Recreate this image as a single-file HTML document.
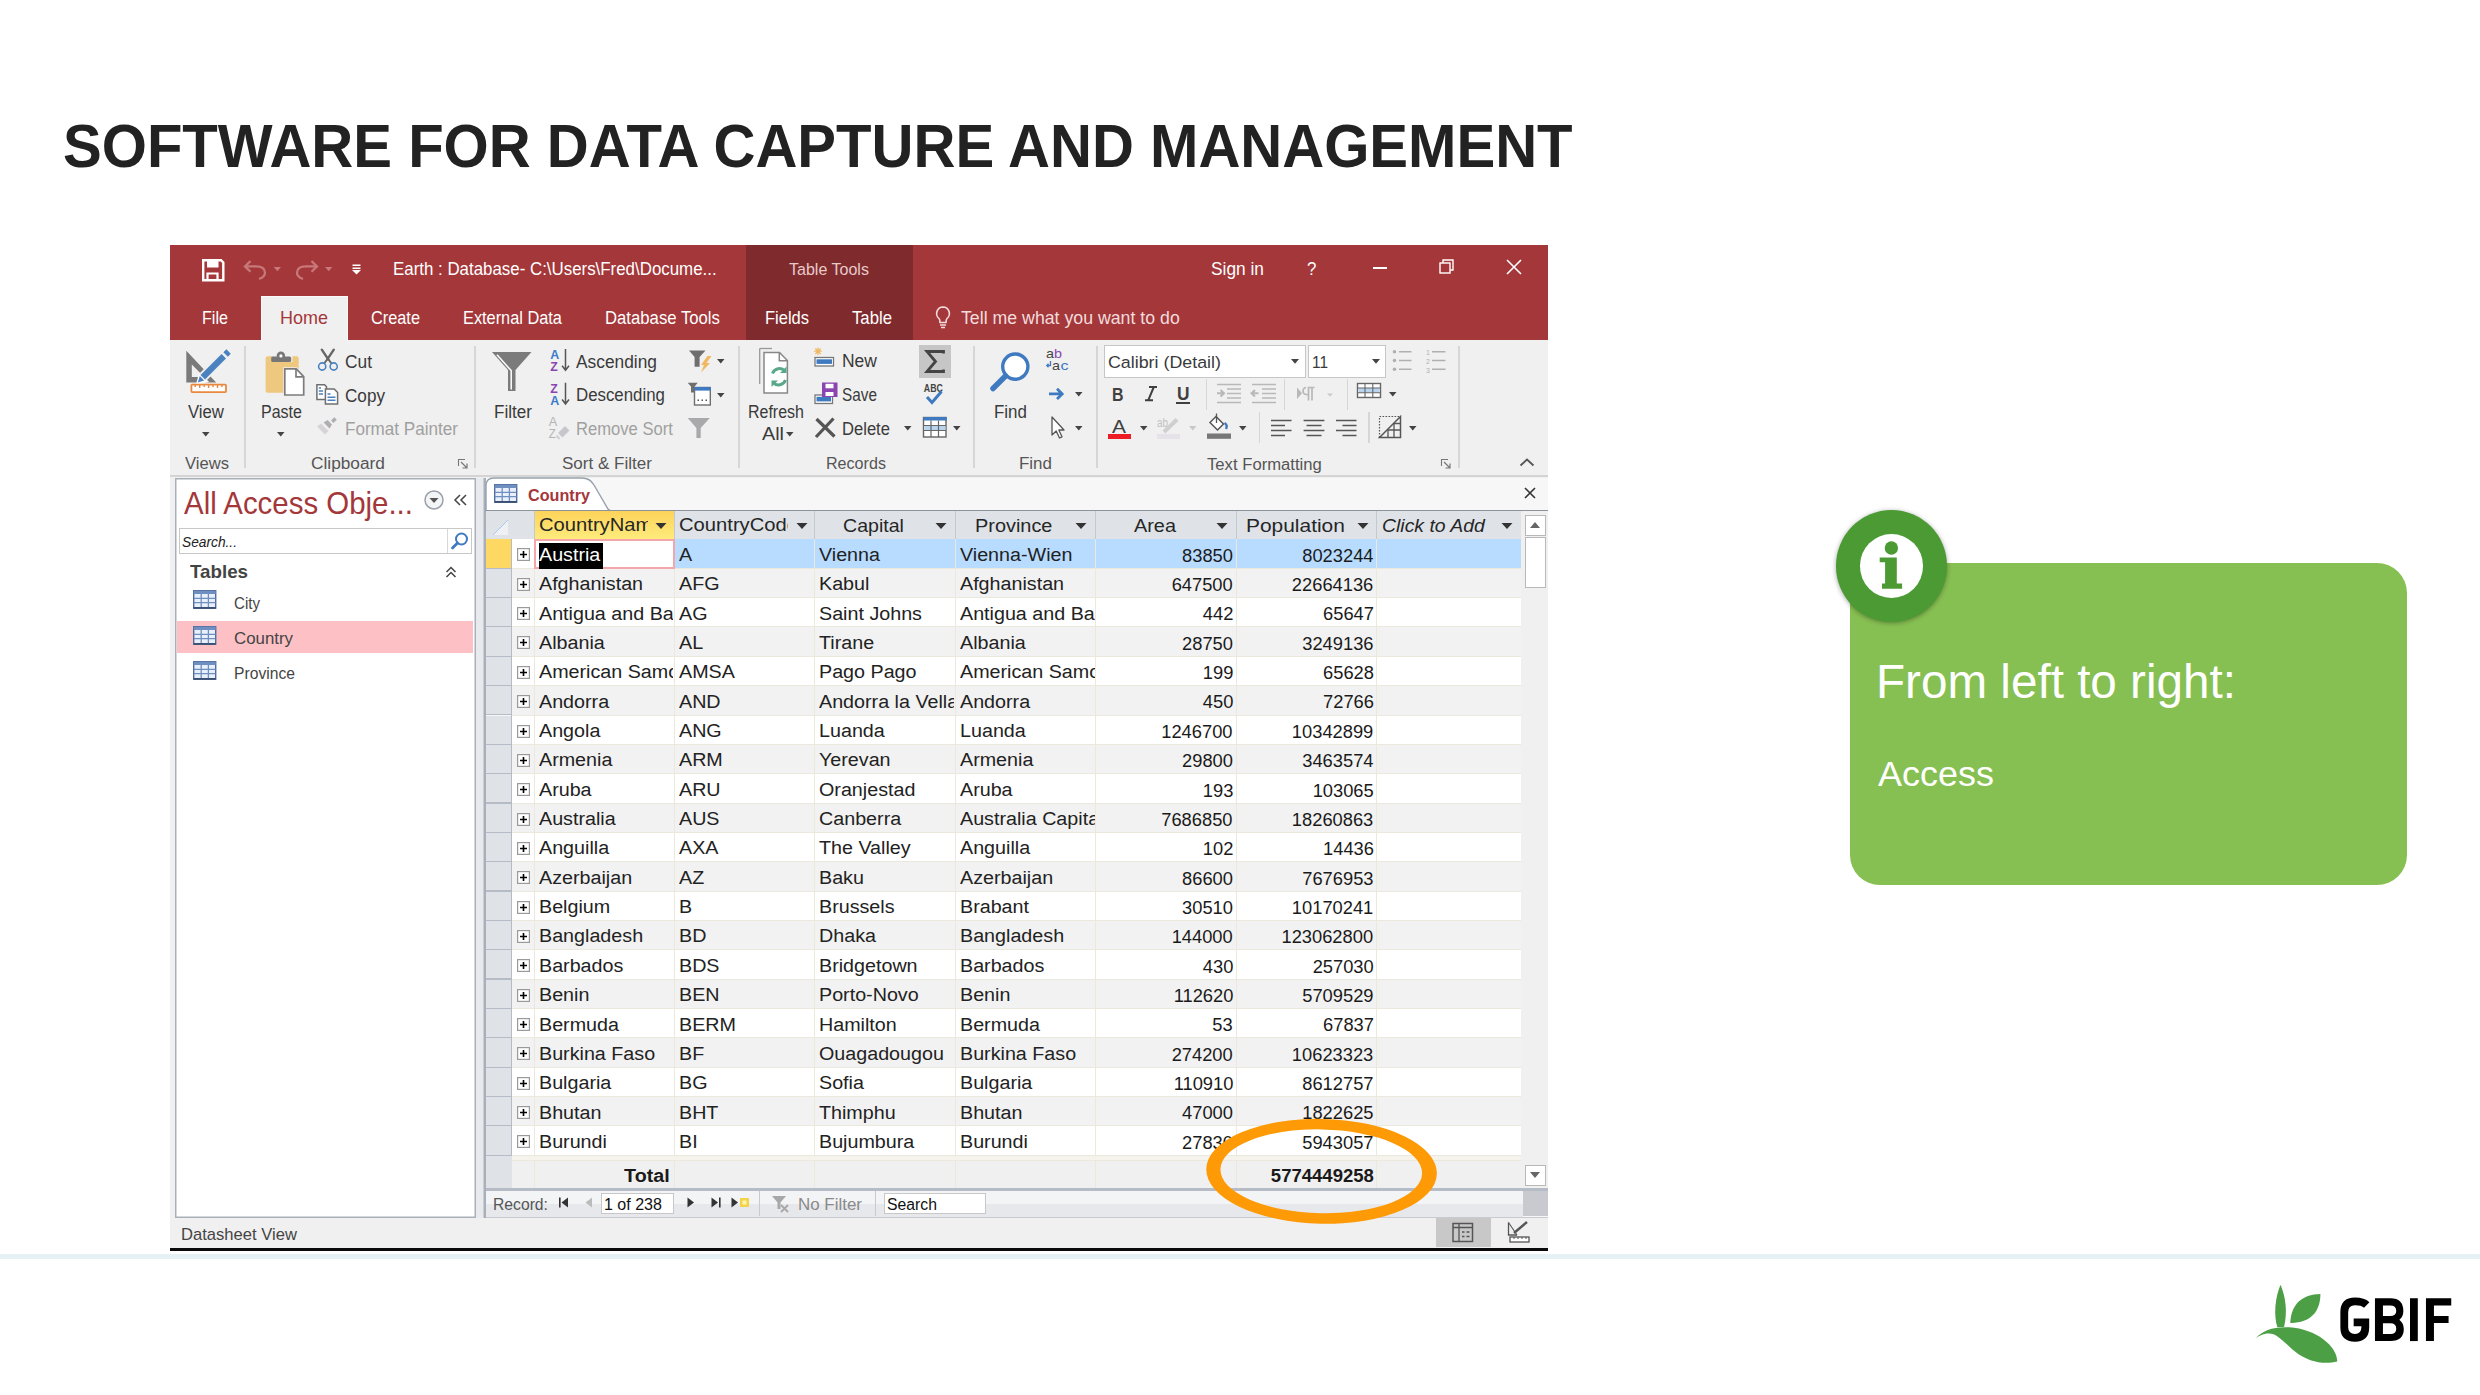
<!DOCTYPE html><html><head><meta charset="utf-8"><title>slide</title><style>
html,body{margin:0;padding:0;}
body{width:2480px;height:1395px;position:relative;overflow:hidden;background:#fff;font-family:"Liberation Sans",sans-serif;}
body>div,body>svg{position:absolute;}
.t{white-space:nowrap;}
</style></head><body>
<div class="t" style="left:63.00px;top:115.28px;font-size:61.45px;line-height:61.45px;color:#222222;transform:scaleX(0.9451);transform-origin:0 0;font-weight:bold;">SOFTWARE FOR DATA CAPTURE AND MANAGEMENT</div>
<div style="left:0.00px;top:1254.00px;width:2480.00px;height:5.00px;background:#e6f1f5;"></div>
<div style="left:170.00px;top:245.00px;width:1378.00px;height:95.00px;background:#a4373a;"></div>
<div style="left:746.00px;top:245.00px;width:167.00px;height:95.00px;background:#7f2b2e;"></div>
<div style="left:170.00px;top:340.00px;width:1378.00px;height:136.00px;background:#f0f0f0;"></div>
<div style="left:170.00px;top:475.00px;width:1378.00px;height:1.50px;background:#d4d4d4;"></div>
<div style="left:261.00px;top:296.00px;width:87.00px;height:45.00px;background:#f0f0f0;box-shadow:inset 1px 1px 0 #fafafa,inset -1px 0 0 #fafafa;"></div>
<div style="left:170.00px;top:476.50px;width:1378.00px;height:772.00px;background:#f0f0f0;"></div>
<div class="t" style="left:393.00px;top:260.52px;font-size:17.46px;line-height:17.46px;color:#ffffff;transform:scaleX(0.9679);transform-origin:0 0;">Earth : Database- C:\Users\Fred\Docume...</div>
<div class="t" style="left:789.00px;top:261.61px;font-size:16.76px;line-height:16.76px;color:#e8c9ca;transform:scaleX(0.9575);transform-origin:0 0;">Table Tools</div>
<div class="t" style="left:1211.00px;top:260.52px;font-size:17.46px;line-height:17.46px;color:#ffffff;transform:scaleX(0.9928);transform-origin:0 0;">Sign in</div>
<div class="t" style="left:1306.50px;top:260.52px;font-size:17.46px;line-height:17.46px;color:#ffffff;transform:scaleX(0.9660);transform-origin:0 0;">?</div>
<div class="t" style="left:201.70px;top:309.67px;font-size:17.88px;line-height:17.88px;color:#ffffff;transform:scaleX(0.9026);transform-origin:0 0;">File</div>
<div class="t" style="left:280.00px;top:309.67px;font-size:17.88px;line-height:17.88px;color:#a4373a;transform:scaleX(1.0065);transform-origin:0 0;">Home</div>
<div class="t" style="left:371.00px;top:309.67px;font-size:17.88px;line-height:17.88px;color:#ffffff;transform:scaleX(0.9132);transform-origin:0 0;">Create</div>
<div class="t" style="left:463.00px;top:309.67px;font-size:17.88px;line-height:17.88px;color:#ffffff;transform:scaleX(0.9140);transform-origin:0 0;">External Data</div>
<div class="t" style="left:605.00px;top:309.67px;font-size:17.88px;line-height:17.88px;color:#ffffff;transform:scaleX(0.9357);transform-origin:0 0;">Database Tools</div>
<div class="t" style="left:765.40px;top:309.67px;font-size:17.88px;line-height:17.88px;color:#ffffff;transform:scaleX(0.9227);transform-origin:0 0;">Fields</div>
<div class="t" style="left:852.00px;top:309.67px;font-size:17.88px;line-height:17.88px;color:#ffffff;transform:scaleX(0.9359);transform-origin:0 0;">Table</div>
<div class="t" style="left:961.00px;top:309.52px;font-size:17.46px;line-height:17.46px;color:#f2dcdd;transform:scaleX(1.0166);transform-origin:0 0;">Tell me what you want to do</div>
<div style="left:1372.50px;top:267.00px;width:14.50px;height:1.50px;background:#ffffff;"></div>
<svg style="left:1439.00px;top:259.00px;" width="16" height="16" viewBox="0 0 16 16"><rect x="1" y="4" width="10" height="10" fill="none" stroke="#fff" stroke-width="1.4"/><path d="M4 4V1h10v10h-3" fill="none" stroke="#fff" stroke-width="1.4"/></svg>
<svg style="left:1506.00px;top:259.00px;" width="16" height="16" viewBox="0 0 16 16"><path d="M1 1L15 15M15 1L1 15" stroke="#fff" stroke-width="1.6"/></svg>
<svg style="left:200.00px;top:257.00px;" width="26" height="26" viewBox="0 0 26 26"><path d="M3.2 3.2H21L23.3 5.5V23.3H3.2z" fill="none" stroke="#fff" stroke-width="2.4"/><rect x="7" y="3.5" width="11.5" height="7" fill="#fff"/><path d="M7.5 23V16.5H17.5V23" fill="none" stroke="#fff" stroke-width="2.2"/></svg>
<svg style="left:240.00px;top:255.00px;" width="125" height="28" viewBox="0 0 125 28"><path d="M5.5 11.4H16Q25 11.4 25 17.8Q25 22 19 24" fill="none" stroke="#c7787a" stroke-width="2.3"/><path d="M10.5 6L5 11.4L10.5 16.8" fill="none" stroke="#c7787a" stroke-width="2.3"/><path d="M33.7 12H41L37.35 16.3z" fill="#c7787a"/><path d="M76.5 11.4H66Q57 11.4 57 17.8Q57 22 63 24" fill="none" stroke="#c7787a" stroke-width="2.3"/><path d="M71.5 6L77 11.4L71.5 16.8" fill="none" stroke="#c7787a" stroke-width="2.3"/><path d="M85 12H92.4L88.7 16.3z" fill="#c7787a"/><path d="M112.5 10.2H120.5M112.5 13.3H120.5" stroke="#fff" stroke-width="1.5"/><path d="M112 15H121L116.5 19.5z" fill="#fff"/></svg>
<svg style="left:934.00px;top:305.00px;" width="18" height="24" viewBox="0 0 18 24"><path d="M9 2a6.5 6.5 0 0 0-4 11.5c1 1 1 2.5 1 4h6c0-1.5 0-3 1-4A6.5 6.5 0 0 0 9 2z" fill="none" stroke="#f2dcdd" stroke-width="1.6"/><path d="M6 20h6M7 22.5h4" stroke="#f2dcdd" stroke-width="1.6"/></svg>
<div class="t" style="left:181.00px;top:1225.67px;font-size:16.34px;line-height:16.34px;color:#444444;transform:scaleX(1.0161);transform-origin:0 0;">Datasheet View</div>
<div style="left:1435.50px;top:1218.40px;width:55.00px;height:29.00px;background:#c8c8c8;"></div>
<div style="left:170.00px;top:1247.50px;width:1378.00px;height:3.00px;background:#0a0a0a;"></div>
<div style="left:244.00px;top:346.00px;width:1.50px;height:122.00px;background:#d6d6d6;"></div>
<div style="left:474.00px;top:346.00px;width:1.50px;height:122.00px;background:#d6d6d6;"></div>
<div style="left:738.00px;top:346.00px;width:1.50px;height:122.00px;background:#d6d6d6;"></div>
<div style="left:973.00px;top:346.00px;width:1.50px;height:122.00px;background:#d6d6d6;"></div>
<div style="left:1096.00px;top:346.00px;width:1.50px;height:122.00px;background:#d6d6d6;"></div>
<div style="left:1458.00px;top:346.00px;width:1.50px;height:122.00px;background:#d6d6d6;"></div>
<div class="t" style="left:184.50px;top:456.06px;font-size:15.64px;line-height:15.64px;color:#555555;transform:scaleX(1.0616);transform-origin:0 0;">Views</div>
<div class="t" style="left:311.00px;top:456.06px;font-size:15.64px;line-height:15.64px;color:#555555;transform:scaleX(1.1052);transform-origin:0 0;">Clipboard</div>
<div class="t" style="left:561.50px;top:456.06px;font-size:15.64px;line-height:15.64px;color:#555555;transform:scaleX(1.0899);transform-origin:0 0;">Sort &amp; Filter</div>
<div class="t" style="left:826.00px;top:456.06px;font-size:15.64px;line-height:15.64px;color:#555555;transform:scaleX(1.0301);transform-origin:0 0;">Records</div>
<div class="t" style="left:1019.00px;top:456.06px;font-size:15.64px;line-height:15.64px;color:#555555;transform:scaleX(1.0844);transform-origin:0 0;">Find</div>
<div class="t" style="left:1207.00px;top:456.56px;font-size:15.64px;line-height:15.64px;color:#555555;transform:scaleX(1.0668);transform-origin:0 0;">Text Formatting</div>
<div class="t" style="left:188.00px;top:403.52px;font-size:17.46px;line-height:17.46px;color:#3a3a3a;transform:scaleX(0.9593);transform-origin:0 0;">View</div>
<div class="t" style="left:261.00px;top:403.52px;font-size:17.46px;line-height:17.46px;color:#3a3a3a;transform:scaleX(0.9184);transform-origin:0 0;">Paste</div>
<div class="t" style="left:494.00px;top:403.52px;font-size:17.46px;line-height:17.46px;color:#3a3a3a;transform:scaleX(0.9795);transform-origin:0 0;">Filter</div>
<div class="t" style="left:748.00px;top:403.52px;font-size:17.46px;line-height:17.46px;color:#3a3a3a;transform:scaleX(0.9161);transform-origin:0 0;">Refresh</div>
<div class="t" style="left:761.50px;top:426.02px;font-size:17.46px;line-height:17.46px;color:#3a3a3a;transform:scaleX(1.1338);transform-origin:0 0;">All</div>
<div class="t" style="left:994.00px;top:403.52px;font-size:17.46px;line-height:17.46px;color:#3a3a3a;transform:scaleX(0.9717);transform-origin:0 0;">Find</div>
<div class="t" style="left:345.00px;top:354.02px;font-size:17.46px;line-height:17.46px;color:#3a3a3a;transform:scaleX(0.9938);transform-origin:0 0;">Cut</div>
<div class="t" style="left:345.00px;top:388.02px;font-size:17.46px;line-height:17.46px;color:#3a3a3a;transform:scaleX(0.9814);transform-origin:0 0;">Copy</div>
<div class="t" style="left:345.00px;top:421.02px;font-size:17.46px;line-height:17.46px;color:#a0a0a0;transform:scaleX(0.9787);transform-origin:0 0;">Format Painter</div>
<div class="t" style="left:575.60px;top:353.72px;font-size:17.46px;line-height:17.46px;color:#3a3a3a;transform:scaleX(0.9935);transform-origin:0 0;">Ascending</div>
<div class="t" style="left:576.00px;top:387.02px;font-size:17.46px;line-height:17.46px;color:#3a3a3a;transform:scaleX(0.9653);transform-origin:0 0;">Descending</div>
<div class="t" style="left:576.00px;top:421.02px;font-size:17.46px;line-height:17.46px;color:#a0a0a0;transform:scaleX(0.9521);transform-origin:0 0;">Remove Sort</div>
<div class="t" style="left:842.00px;top:353.42px;font-size:17.46px;line-height:17.46px;color:#3a3a3a;transform:scaleX(1.0021);transform-origin:0 0;">New</div>
<div class="t" style="left:842.00px;top:387.02px;font-size:17.46px;line-height:17.46px;color:#3a3a3a;transform:scaleX(0.8795);transform-origin:0 0;">Save</div>
<div class="t" style="left:842.00px;top:421.02px;font-size:17.46px;line-height:17.46px;color:#3a3a3a;transform:scaleX(0.9511);transform-origin:0 0;">Delete</div>
<div style="left:1104.00px;top:345.00px;width:201.60px;height:32.60px;background:#ffffff;box-shadow:inset 0 0 0 1px #c6c6c6;"></div>
<div style="left:1307.50px;top:345.00px;width:78.50px;height:32.60px;background:#ffffff;box-shadow:inset 0 0 0 1px #c6c6c6;"></div>
<div class="t" style="left:1108.00px;top:354.61px;font-size:16.76px;line-height:16.76px;color:#3a3a3a;transform:scaleX(1.0643);transform-origin:0 0;">Calibri (Detail)</div>
<div class="t" style="left:1311.50px;top:354.61px;font-size:16.76px;line-height:16.76px;color:#3a3a3a;transform:scaleX(0.9196);transform-origin:0 0;">11</div>
<svg style="left:180.00px;top:345.00px;" width="52" height="52" viewBox="0 0 52 52">
<path d="M6.3 5.8V37.5H36.2z M11.8 19.6V31.9H24.2z" fill="#7a7a7a" fill-rule="evenodd"/>
<path d="M18 37.6L20 30.5L26 36z" fill="#fff" stroke="#fff" stroke-width="3"/>
<line x1="22.5" y1="32.5" x2="44" y2="11" stroke="#f0f0f0" stroke-width="10"/>
<line x1="22.8" y1="32.2" x2="43.8" y2="11.2" stroke="#4a82c0" stroke-width="6.3"/>
<line x1="45.6" y1="9.4" x2="48.6" y2="6.4" stroke="#4a82c0" stroke-width="6.3"/>
<path d="M17.8 37.4L19.8 31L24.2 35.4z" fill="#4a82c0"/>
<rect x="11.4" y="39.6" width="34.6" height="7.5" rx="0.8" fill="#fff" stroke="#e8893f" stroke-width="1.8"/>
<path d="M15.2 40v2M19.7 40v3M24.2 40v2M28.6 40v3M33 40v2M37.5 40v3M41.9 40v2" stroke="#e8893f" stroke-width="1.4"/>
</svg>
<svg style="left:201.25px;top:431.35px" width="9.5" height="6.5"><path d="M1 1H8.50L4.75 5.50z" fill="#444"/></svg>
<svg style="left:260.00px;top:345.00px;" width="48" height="54" viewBox="0 0 48 54">
<path d="M5.6 13.3Q5.6 11.3 7.6 11.3H12.5V17H32.5V11.3H36.7Q38.7 11.3 38.7 13.3V47.7H7.6Q5.6 47.7 5.6 45.7z" fill="#edc87e"/>
<rect x="11.2" y="11.5" width="20" height="5.5" rx="1.5" fill="#777"/>
<circle cx="20.9" cy="10.7" r="4.2" fill="#777"/><circle cx="20.9" cy="10.9" r="1.6" fill="#fff"/>
<path d="M24.8 23.8H36.3L43.7 31.6V50H24.8z" fill="#fff" stroke="#f0f0f0" stroke-width="3"/>
<path d="M24.8 23.8H36.3L43.7 31.6V50H24.8z" fill="#fff" stroke="#7c7c7c" stroke-width="1.7"/>
<path d="M36 24V31.8H43.7" fill="none" stroke="#7c7c7c" stroke-width="1.7"/>
</svg>
<svg style="left:275.75px;top:431.35px" width="9.5" height="6.5"><path d="M1 1H8.50L4.75 5.50z" fill="#444"/></svg>
<svg style="left:314.00px;top:345.00px;" width="28" height="28" viewBox="0 0 28 28">
<path d="M7.8 4.7L14.3 14.3M19.8 4.7L13.3 14.3" stroke="#666" stroke-width="2.4" stroke-linecap="round"/>
<path d="M13.8 13.5L10.2 18.5M13.8 13.5L17.5 18.5" stroke="#666" stroke-width="2"/>
<circle cx="8.2" cy="21.5" r="3.6" fill="none" stroke="#4a82c0" stroke-width="1.6"/>
<circle cx="19.7" cy="21.5" r="3.6" fill="none" stroke="#4a82c0" stroke-width="1.6"/>
</svg>
<svg style="left:314.00px;top:382.00px;" width="28" height="26" viewBox="0 0 28 26">
<path d="M2.9 2.7H10.6L12.5 4.7V17.5H2.9z" fill="#fff" stroke="#6f6f6f" stroke-width="1.5"/>
<path d="M4.8 6H7M4.8 9H9M4.8 12H9" stroke="#4a82c0" stroke-width="1.4"/>
<path d="M11.4 7H20.2L23.6 10.5V22H11.4z" fill="#fff" stroke="#6f6f6f" stroke-width="1.5"/>
<path d="M13.5 12H16.5M13.5 15.2H21.5M13.5 18.3H21.5" stroke="#4a82c0" stroke-width="1.4"/>
</svg>
<svg style="left:314.00px;top:416.00px;" width="28" height="24" viewBox="0 0 28 24">
<path d="M3 10.5L11 18.5L14.5 15L7 7.5z" fill="#d6d4d8"/>
<path d="M9.6 6.5L13.6 4L18 8.4L15.5 12.4z" fill="#b0aeb2"/>
<path d="M17 4.6L20.3 1.3L22.8 3.8L19.5 7.1z" fill="#b0aeb2"/>
</svg>
<svg style="left:457.00px;top:458.00px;" width="12" height="12" viewBox="0 0 12 12"><path d="M1.5 8V1.5H8" fill="none" stroke="#777" stroke-width="1.1"/><path d="M4 4L9.5 9.5M10 5.5V10H5.5" fill="none" stroke="#777" stroke-width="1.2"/></svg>
<svg style="left:1440.00px;top:458.00px;" width="12" height="12" viewBox="0 0 12 12"><path d="M1.5 8V1.5H8" fill="none" stroke="#777" stroke-width="1.1"/><path d="M4 4L9.5 9.5M10 5.5V10H5.5" fill="none" stroke="#777" stroke-width="1.2"/></svg>
<svg style="left:488.00px;top:348.00px;" width="48" height="48" viewBox="0 0 48 48">
<path d="M4 4H43.5L27.5 22V43H20V22z" fill="#7b7b7b"/>
<path d="M9 6.8L23.2 22.6V41.5" fill="none" stroke="#fff" stroke-width="1.5"/>
</svg>
<svg style="left:540.00px;top:345.00px;" width="190" height="100" viewBox="0 0 190 100">
<g font-family="Liberation Sans" font-weight="bold">
<text x="10.2" y="13.8" font-size="13.5" fill="#3d7cc9" textLength="9" lengthAdjust="spacingAndGlyphs">A</text>
<text x="10.2" y="25.8" font-size="13.5" fill="#8a45b0" textLength="7.5" lengthAdjust="spacingAndGlyphs">Z</text>
<text x="10.2" y="47.9" font-size="13.5" fill="#8a45b0" textLength="7.5" lengthAdjust="spacingAndGlyphs">Z</text>
<text x="10.2" y="59.5" font-size="13.5" fill="#3d7cc9" textLength="9" lengthAdjust="spacingAndGlyphs">A</text>
<text x="8.7" y="80.5" font-size="12.5" fill="#b4b4b4" font-weight="normal" textLength="8.5" lengthAdjust="spacingAndGlyphs">A</text>
<text x="8.7" y="93" font-size="12.5" fill="#b4b4b4" font-weight="normal" textLength="7" lengthAdjust="spacingAndGlyphs">Z</text>
</g>
<path d="M25.5 4V25M22.1 20.7L25.5 25.2L29 20.7" fill="none" stroke="#555" stroke-width="1.5"/>
<path d="M25.5 37.7V59M22.1 54.5L25.5 59L29 54.5" fill="none" stroke="#555" stroke-width="1.5"/>
<path d="M18 88L25 81L29.5 85.5L22.5 92.5z" fill="#c8c6ca"/>
<path d="M16.5 90.5L19.5 94" stroke="#d0d0d0" stroke-width="2"/>
<path d="M149 5.4H165.5L159.6 12V21.8H154.6V12z" fill="#6e6e6e"/>
<path d="M167.5 11H171.5L166.5 18H170L161 27.5L164 20H161z" fill="#f0b860"/>
<path d="M147.7 37.7H157.8L154.6 41.5V47.5H151V41.5z" fill="#6e6e6e"/>
<rect x="154.5" y="42.5" width="15.8" height="17.5" fill="#fff" stroke="#6e6e6e" stroke-width="1.4"/>
<rect x="154.5" y="42" width="16.4" height="3.6" fill="#3f7ac0"/>
<path d="M157.5 55.2H159M161.5 55.2H163M165.5 55.2H167" stroke="#555" stroke-width="1.6"/>
<path d="M147.7 72.9H169.8L160.7 83V92.9H156.4V83z" fill="#a9a8ab"/>
</svg>
<svg style="left:715.75px;top:358.15px" width="9.5" height="6.5"><path d="M1 1H8.50L4.75 5.50z" fill="#444"/></svg>
<svg style="left:715.75px;top:391.55px" width="9.5" height="6.5"><path d="M1 1H8.50L4.75 5.50z" fill="#444"/></svg>
<svg style="left:755.00px;top:345.00px;" width="44" height="54" viewBox="0 0 44 54">
<path d="M4.7 3.5H17" fill="none" stroke="#999" stroke-width="1.3"/>
<path d="M4.7 3.5V39" fill="none" stroke="#999" stroke-width="1.3"/>
<path d="M9 7.5H24.5L32.4 15.5V48H9z" fill="#fff" stroke="#888" stroke-width="1.5"/>
<path d="M24.3 7.7V15.7H32.2" fill="none" stroke="#888" stroke-width="1.5"/>
<path d="M17.5 28.5A7.5 7.5 0 0 1 30 26" fill="none" stroke="#5aa88a" stroke-width="3"/>
<path d="M31.5 21.5V28H25z" fill="#5aa88a"/>
<path d="M30.5 35A7.5 7.5 0 0 1 18 37.5" fill="none" stroke="#5aa88a" stroke-width="3"/>
<path d="M16.5 42V35.5H23z" fill="#5aa88a"/>
</svg>
<svg style="left:784.75px;top:431.25px" width="9.5" height="6.5"><path d="M1 1H8.50L4.75 5.50z" fill="#444"/></svg>
<svg style="left:810.00px;top:345.00px;" width="32" height="62" viewBox="0 0 32 62">
<g stroke="#f0b860" stroke-width="1.2"><path d="M8 2.5V10M4.2 6.2H11.8M5.3 3.5L10.7 9M10.7 3.5L5.3 9"/></g>
<rect x="5" y="12.5" width="18.5" height="8.5" fill="#fff" stroke="#777" stroke-width="1.3"/>
<rect x="6.5" y="14.3" width="15.5" height="4.6" fill="#3f7ac0"/>
<rect x="5" y="50" width="17.5" height="8.5" fill="#fff" stroke="#777" stroke-width="1.3"/>
<rect x="6.5" y="51.8" width="14.5" height="4.6" fill="#3f7ac0"/>
<rect x="12" y="37.5" width="15.5" height="14.5" fill="#8a45b0"/>
<rect x="15.5" y="38.8" width="8" height="4.5" fill="#fff"/>
<rect x="15.5" y="47" width="8" height="4" fill="#fff"/>
</svg>
<svg style="left:812.00px;top:415.00px;" width="28" height="26" viewBox="0 0 28 26"><path d="M4.5 4L22.5 21.5M21.5 3.5L4 22" stroke="#555" stroke-width="3.2" stroke-linecap="butt"/></svg>
<svg style="left:903.25px;top:424.95px" width="9.5" height="6.5"><path d="M1 1H8.50L4.75 5.50z" fill="#444"/></svg>
<div style="left:919.00px;top:344.60px;width:31.60px;height:33.00px;background:#c6c6c6;"></div>
<svg style="left:919.00px;top:344.60px;" width="32" height="33" viewBox="0 0 32 33"><path d="M24.5 8.5V6.5H8L16.5 16.5L8 26.5H24.5V24.5" fill="none" stroke="#444" stroke-width="2.8" stroke-linejoin="miter"/></svg>
<svg style="left:920.00px;top:380.00px;" width="30" height="62" viewBox="0 0 30 62">
<text x="3.8" y="11.5" font-family="Liberation Sans" font-weight="bold" font-size="10" fill="#444" textLength="19" lengthAdjust="spacingAndGlyphs">ABC</text>
<path d="M7 17L12 22.5L21.5 11.5" fill="none" stroke="#3f7ac0" stroke-width="3"/>
<rect x="3.5" y="37.5" width="22.5" height="19.5" fill="#fff" stroke="#666" stroke-width="1.4"/>
<rect x="3.5" y="37" width="23.2" height="3.5" fill="#3f7ac0"/>
<rect x="4.5" y="46" width="21" height="4" fill="#b9d4ef"/>
<path d="M3.5 45.5H26M3.5 50.5H26M11 40.5V57M18.5 40.5V57" stroke="#666" stroke-width="1.2"/>
</svg>
<svg style="left:951.75px;top:424.95px" width="9.5" height="6.5"><path d="M1 1H8.50L4.75 5.50z" fill="#444"/></svg>
<svg style="left:985.00px;top:348.00px;" width="50" height="46" viewBox="0 0 50 46">
<circle cx="30.3" cy="18.6" r="12.6" fill="#fff" stroke="#3f7ac0" stroke-width="3.4"/>
<line x1="20.5" y1="28" x2="8" y2="40.5" stroke="#3f7ac0" stroke-width="5.5" stroke-linecap="round"/>
</svg>
<svg style="left:1042.00px;top:345.00px;" width="30" height="30" viewBox="0 0 30 30">
<text x="4" y="13" font-family="Liberation Sans" font-size="13" fill="#444" textLength="8" lengthAdjust="spacingAndGlyphs">a</text>
<text x="12" y="13" font-family="Liberation Sans" font-size="13" fill="#8a45b0" textLength="8" lengthAdjust="spacingAndGlyphs">b</text>
<text x="10" y="25" font-family="Liberation Sans" font-size="13" fill="#444" textLength="8" lengthAdjust="spacingAndGlyphs">a</text>
<text x="18.5" y="25" font-family="Liberation Sans" font-size="13" fill="#3f7ac0" textLength="8" lengthAdjust="spacingAndGlyphs">c</text>
<path d="M8.5 16V20.5H5M6.5 18.8L4.8 20.5L6.5 22.2" fill="none" stroke="#3f7ac0" stroke-width="1.3"/>
</svg>
<svg style="left:1046.00px;top:386.00px;" width="22" height="16" viewBox="0 0 22 16"><path d="M3 7.9H16M11 2.8L16.2 7.9L11 13" fill="none" stroke="#3f7ac0" stroke-width="2.8"/></svg>
<svg style="left:1073.85px;top:391.05px" width="9.5" height="6.5"><path d="M1 1H8.50L4.75 5.50z" fill="#444"/></svg>
<svg style="left:1049.00px;top:414.00px;" width="18" height="26" viewBox="0 0 18 26"><path d="M3 3V21L7.2 17L10.5 24L13 22.8L9.8 16H15z" fill="#fff" stroke="#555" stroke-width="1.3" stroke-linejoin="round"/></svg>
<svg style="left:1073.85px;top:424.95px" width="9.5" height="6.5"><path d="M1 1H8.50L4.75 5.50z" fill="#444"/></svg>
<svg style="left:1290.00px;top:357.80px" width="10.0" height="6.8"><path d="M1 1H9.00L5.00 5.80z" fill="#444"/></svg>
<svg style="left:1370.70px;top:357.80px" width="10.0" height="6.8"><path d="M1 1H9.00L5.00 5.80z" fill="#444"/></svg>
<svg style="left:1390.00px;top:345.00px;" width="60" height="30" viewBox="0 0 60 30">
<g fill="#b0b0b0"><circle cx="4.5" cy="6.8" r="1.8"/><circle cx="4.5" cy="15.5" r="1.8"/><circle cx="4.5" cy="24.2" r="1.8"/></g>
<path d="M9 6.8H21.5M9 15.5H21.5M9 24.2H21.5" stroke="#b0b0b0" stroke-width="1.4"/>
<text x="36" y="10" font-family="Liberation Sans" font-size="7" fill="#b0b0b0">1</text>
<text x="36" y="19" font-family="Liberation Sans" font-size="7" fill="#b0b0b0">2</text>
<text x="36" y="27.5" font-family="Liberation Sans" font-size="7" fill="#b0b0b0">3</text>
<path d="M42 6.8H55.5M42 15.5H55.5M42 24.2H55.5" stroke="#b0b0b0" stroke-width="1.4"/>
</svg>
<div class="t" style="left:1111.50px;top:385.73px;font-size:18.16px;line-height:18.16px;color:#404040;transform:scaleX(0.8770);transform-origin:0 0;font-weight:bold;">B</div>
<svg style="left:1143.00px;top:385.00px;" width="16" height="17" viewBox="0 0 16 17"><path d="M6 2H14M2 15.3H10M10.8 2L5.2 15.3" stroke="#404040" stroke-width="2" fill="none"/></svg>
<div class="t" style="left:1177.00px;top:384.93px;font-size:18.16px;line-height:18.16px;color:#404040;transform:scaleX(0.9533);transform-origin:0 0;font-weight:bold;">U</div>
<div style="left:1176.30px;top:401.80px;width:13.50px;height:1.80px;background:#404040;"></div>
<div style="left:1206.00px;top:378.50px;width:1.30px;height:31.50px;background:#d6d6d6;"></div>
<div style="left:1284.00px;top:378.50px;width:1.30px;height:31.50px;background:#d6d6d6;"></div>
<div style="left:1346.70px;top:378.50px;width:1.30px;height:31.50px;background:#d6d6d6;"></div>
<div style="left:1258.90px;top:412.00px;width:1.30px;height:31.00px;background:#d6d6d6;"></div>
<div style="left:1368.40px;top:412.00px;width:1.30px;height:31.00px;background:#d6d6d6;"></div>
<svg style="left:1214.00px;top:382.00px;" width="64" height="24" viewBox="0 0 64 24">
<g stroke="#b8b8b8" stroke-width="1.4"><path d="M3 2.5H27M13 7H27M13 11.5H27M13 16H27M3 20.5H27"/>
<path d="M38 2.5H62M48 7H62M48 11.5H62M48 16H62M38 20.5H62"/></g>
<path d="M3 11.3H9.5M6.5 8L10 11.3L6.5 14.6" fill="none" stroke="#b8b8b8" stroke-width="2"/>
<path d="M44.5 11.3H38M41 8L37.5 11.3L41 14.6" fill="none" stroke="#b8b8b8" stroke-width="2"/>
</svg>
<svg style="left:1294.00px;top:384.00px;" width="40" height="20" viewBox="0 0 40 20"><path d="M3 3.5V15L8 9.2z" fill="#b8b8b8"/><path d="M14.5 16.5V3.5H20.5M18 3.5V16.5M12 3.5A3 3.5 0 0 0 12 10.5H14.5" fill="none" stroke="#b8b8b8" stroke-width="1.7"/><path d="M33 9.5H39L36 12.5z" fill="#c8c8c8"/></svg>
<svg style="left:1355.00px;top:381.00px;" width="30" height="22" viewBox="0 0 30 22"><rect x="2.5" y="2.5" width="23" height="14" fill="#fff" stroke="#666" stroke-width="1.4"/><rect x="3.5" y="7" width="21" height="4.5" fill="#b9d4ef"/><path d="M2.5 7H25.5M2.5 11.7H25.5M10 2.5V16.5M17.8 2.5V16.5" stroke="#666" stroke-width="1.1"/></svg>
<svg style="left:1388.25px;top:391.05px" width="9.5" height="6.5"><path d="M1 1H8.50L4.75 5.50z" fill="#444"/></svg>
<div class="t" style="left:1112.30px;top:417.84px;font-size:18.85px;line-height:18.85px;color:#404040;transform:scaleX(1.1132);transform-origin:0 0;">A</div>
<div style="left:1107.50px;top:434.00px;width:23.30px;height:5.20px;background:#ee1c25;"></div>
<svg style="left:1138.55px;top:424.95px" width="9.5" height="6.5"><path d="M1 1H8.50L4.75 5.50z" fill="#444"/></svg>
<svg style="left:1155.00px;top:413.00px;" width="30" height="30" viewBox="0 0 30 30"><text x="2" y="14" font-family="Liberation Sans" font-size="12" fill="#c2c2c2" textLength="11" lengthAdjust="spacingAndGlyphs">ab</text><path d="M9 19L22 6.5" stroke="#cfcfcf" stroke-width="4"/><rect x="2" y="21" width="23" height="5" fill="#e6e2ea"/></svg>
<svg style="left:1188.25px;top:424.95px" width="9.5" height="6.5"><path d="M1 1H8.50L4.75 5.50z" fill="#c8c8c8"/></svg>
<svg style="left:1205.00px;top:412.00px;" width="30" height="30" viewBox="0 0 30 30"><path d="M11 4.5L18.5 12L12.5 18L5 10.5z" fill="#fff" stroke="#555" stroke-width="1.5"/><path d="M11.5 11V1.5" stroke="#555" stroke-width="1.3"/><path d="M19.5 11Q23 13 21 17" fill="none" stroke="#3f7ac0" stroke-width="2.4"/><rect x="2" y="21.5" width="24" height="5.3" fill="#777"/></svg>
<svg style="left:1237.95px;top:424.95px" width="9.5" height="6.5"><path d="M1 1H8.50L4.75 5.50z" fill="#444"/></svg>
<svg style="left:1268.00px;top:417.00px;" width="92" height="22" viewBox="0 0 92 22">
<g stroke="#555" stroke-width="1.5">
<path d="M3 3.5H23.5M3 8.5H17M3 13.5H23.5M3 18.5H17"/>
<path d="M35.6 3.5H56.4M38.5 8.5H53.5M35.6 13.5H56.4M38.5 18.5H53.5"/>
<path d="M68 3.5H88.5M74.5 8.5H88.5M68 13.5H88.5M74.5 18.5H88.5"/>
</g></svg>
<svg style="left:1376.00px;top:413.00px;" width="30" height="28" viewBox="0 0 30 28"><path d="M3.5 24.5V3.5H24.5" fill="none" stroke="#555" stroke-width="1.2" stroke-dasharray="1.6 1.4"/><path d="M3.5 24.5L24.5 3.5V24.5z" fill="none" stroke="#555" stroke-width="1.5"/><path d="M12 17V24.5M18 10.5V24.5M12 17H24.5M18 10.5H24.5" stroke="#555" stroke-width="1.3"/></svg>
<svg style="left:1407.65px;top:424.95px" width="9.5" height="6.5"><path d="M1 1H8.50L4.75 5.50z" fill="#444"/></svg>
<svg style="left:1518.00px;top:456.00px;" width="18" height="12" viewBox="0 0 18 12"><path d="M2.5 9.5L9 3.5L15.5 9.5" fill="none" stroke="#555" stroke-width="1.8"/></svg>
<div style="left:175.00px;top:477.50px;width:301.00px;height:740.00px;background:#ffffff;box-shadow:inset 1.5px 1.5px 0 #a9b0ba, inset -1.5px -1.5px 0 #a9b0ba;"></div>
<div style="left:476.00px;top:477.50px;width:8.00px;height:740.00px;background:#e8eaed;box-shadow:inset -1px 0 0 #c9ced5;"></div>
<div class="t" style="left:184.00px;top:488.79px;font-size:30.73px;line-height:30.73px;color:#a4373a;transform:scaleX(0.9579);transform-origin:0 0;">All Access Obje...</div>
<svg style="left:422.00px;top:488.00px;" width="24" height="24" viewBox="0 0 24 24"><circle cx="12" cy="12" r="9" fill="#f4f5f7" stroke="#9aa1aa" stroke-width="1.5"/><path d="M7.5 10H16.5L12 15z" fill="#555"/></svg>
<svg style="left:451.00px;top:492.00px;" width="18" height="16" viewBox="0 0 18 16"><path d="M9 3L4 8L9 13M15 3L10 8L15 13" fill="none" stroke="#444" stroke-width="1.5"/></svg>
<div style="left:179.00px;top:528.00px;width:293.00px;height:26.40px;background:#ffffff;box-shadow:inset 0 0 0 1px #c8c8c8;"></div>
<div style="left:446.60px;top:529.00px;width:1.00px;height:24.40px;background:#d8d8d8;"></div>
<svg style="left:448.00px;top:529.00px;" width="24" height="24" viewBox="0 0 24 24"><circle cx="13.5" cy="10" r="5.5" fill="none" stroke="#3f7ac0" stroke-width="2"/><path d="M9.5 14L4.5 19" stroke="#3f7ac0" stroke-width="2.8" stroke-linecap="round"/></svg>
<div class="t" style="left:182.00px;top:533.80px;font-size:15.36px;line-height:15.36px;color:#222222;transform:scaleX(0.8945);transform-origin:0 0;font-style:italic;">Search...</div>
<div class="t" style="left:189.50px;top:562.63px;font-size:18.16px;line-height:18.16px;color:#444444;transform:scaleX(1.0325);transform-origin:0 0;font-weight:bold;">Tables</div>
<svg style="left:442.00px;top:563.00px;" width="18" height="18" viewBox="0 0 18 18"><path d="M4.5 9L9 4.5L13.5 9M4.5 14L9 9.5L13.5 14" fill="none" stroke="#444" stroke-width="1.5"/></svg>
<div style="left:177.40px;top:621.20px;width:295.60px;height:32.00px;background:#fdc0c4;"></div>
<svg style="left:193.40px;top:590.30px;" width="24" height="20" viewBox="0 0 24 20"><rect x="0.7" y="0.7" width="22" height="17.5" fill="#e9f0fb" stroke="#4f6b9a" stroke-width="1.4"/><rect x="0.7" y="0.7" width="22" height="3.3" fill="#6f8fc0"/><path d="M1 8.3H22.5M1 12.7H22.5M8.2 4V18M15.4 4V18" stroke="#6f8fc0" stroke-width="1.3"/><rect x="0.7" y="17" width="22" height="1.8" fill="#3a4f73"/></svg>
<div class="t" style="left:234.00px;top:594.79px;font-size:16.20px;line-height:16.20px;color:#444444;transform:scaleX(0.9319);transform-origin:0 0;">City</div>
<svg style="left:193.40px;top:625.60px;" width="24" height="20" viewBox="0 0 24 20"><rect x="0.7" y="0.7" width="22" height="17.5" fill="#e9f0fb" stroke="#4f6b9a" stroke-width="1.4"/><rect x="0.7" y="0.7" width="22" height="3.3" fill="#6f8fc0"/><path d="M1 8.3H22.5M1 12.7H22.5M8.2 4V18M15.4 4V18" stroke="#6f8fc0" stroke-width="1.3"/><rect x="0.7" y="17" width="22" height="1.8" fill="#3a4f73"/></svg>
<div class="t" style="left:233.50px;top:630.09px;font-size:16.20px;line-height:16.20px;color:#444444;transform:scaleX(1.0400);transform-origin:0 0;">Country</div>
<svg style="left:193.40px;top:660.90px;" width="24" height="20" viewBox="0 0 24 20"><rect x="0.7" y="0.7" width="22" height="17.5" fill="#e9f0fb" stroke="#4f6b9a" stroke-width="1.4"/><rect x="0.7" y="0.7" width="22" height="3.3" fill="#6f8fc0"/><path d="M1 8.3H22.5M1 12.7H22.5M8.2 4V18M15.4 4V18" stroke="#6f8fc0" stroke-width="1.3"/><rect x="0.7" y="17" width="22" height="1.8" fill="#3a4f73"/></svg>
<div class="t" style="left:234.00px;top:665.39px;font-size:16.20px;line-height:16.20px;color:#444444;transform:scaleX(0.9677);transform-origin:0 0;">Province</div>
<div style="left:484.00px;top:477.50px;width:1064.00px;height:740.00px;background:#f7f7f7;"></div>
<div style="left:484.00px;top:477.50px;width:1.50px;height:740.00px;background:#a9b0ba;"></div>
<svg style="left:484.00px;top:476.00px;" width="130" height="36" viewBox="0 0 130 36"><path d="M2 36V10Q2 2 10 2H98Q106 2 110 9L124 33Q126 35.5 130 35.5V36z" fill="#ffffff" stroke="#97a1ad" stroke-width="1.4"/></svg>
<svg style="left:493.50px;top:483.50px;" width="24" height="20" viewBox="0 0 24 20"><rect x="0.7" y="0.7" width="22" height="17.5" fill="#e9f0fb" stroke="#4f6b9a" stroke-width="1.4"/><rect x="0.7" y="0.7" width="22" height="3.3" fill="#6f8fc0"/><path d="M1 8.3H22.5M1 12.7H22.5M8.2 4V18M15.4 4V18" stroke="#6f8fc0" stroke-width="1.3"/><rect x="0.7" y="17" width="22" height="1.8" fill="#3a4f73"/></svg>
<div class="t" style="left:528.00px;top:486.70px;font-size:16.06px;line-height:16.06px;color:#a4373a;transform:scaleX(1.0071);transform-origin:0 0;font-weight:bold;">Country</div>
<svg style="left:1523.00px;top:486.00px;" width="14" height="14" viewBox="0 0 14 14"><path d="M2 2L12 12M12 2L2 12" stroke="#333" stroke-width="1.6"/></svg>
<div style="left:485.50px;top:509.50px;width:1062.00px;height:1.50px;background:#8c939d;"></div>
<div style="left:485.50px;top:511.00px;width:1036.00px;height:28.00px;background:#dfe3e8;"></div>
<div style="left:534.00px;top:511.00px;width:139.90px;height:28.00px;background:linear-gradient(#fdd35a,#feeb7c);"></div>
<svg style="left:492.00px;top:516.00px;" width="18" height="20" viewBox="0 0 18 20"><path d="M1 19L16 4V19z" fill="#eef0f3"/><path d="M1 19L16 4" stroke="#a8c8ec" stroke-width="1"/></svg>
<div style="left:533.50px;top:511.00px;width:1.20px;height:28.00px;background:#c4c9d0;"></div>
<div style="left:673.90px;top:511.00px;width:1.20px;height:28.00px;background:#c4c9d0;"></div>
<div style="left:814.30px;top:511.00px;width:1.20px;height:28.00px;background:#c4c9d0;"></div>
<div style="left:954.70px;top:511.00px;width:1.20px;height:28.00px;background:#c4c9d0;"></div>
<div style="left:1095.10px;top:511.00px;width:1.20px;height:28.00px;background:#c4c9d0;"></div>
<div style="left:1235.50px;top:511.00px;width:1.20px;height:28.00px;background:#c4c9d0;"></div>
<div style="left:1375.90px;top:511.00px;width:1.20px;height:28.00px;background:#c4c9d0;"></div>
<div style="left:1521.00px;top:511.00px;width:1.20px;height:28.00px;background:#c4c9d0;"></div>
<div style="left:534px;top:511px;width:114px;height:28px;overflow:hidden;"><div class="t" style="position:absolute;left:5px;top:6.22px;font-size:17.46px;line-height:17.46px;color:#262626;transform:scaleX(1.158);transform-origin:0 0;">CountryName</div></div>
<svg style="left:655.00px;top:522.00px;" width="12" height="8" viewBox="0 0 12 8"><path d="M0.5 1H11.5L6 7z" fill="#333"/></svg>
<div style="left:675px;top:511px;width:113px;height:28px;overflow:hidden;"><div class="t" style="position:absolute;left:4px;top:6.22px;font-size:17.46px;line-height:17.46px;color:#262626;transform:scaleX(1.158);transform-origin:0 0;">CountryCode</div></div>
<svg style="left:795.50px;top:522.00px;" width="12" height="8" viewBox="0 0 12 8"><path d="M0.5 1H11.5L6 7z" fill="#333"/></svg>
<div class="t" style="left:843.00px;top:518.02px;font-size:17.46px;line-height:17.46px;color:#262626;transform:scaleX(1.1225);transform-origin:0 0;">Capital</div>
<svg style="left:935.00px;top:522.00px;" width="12" height="8" viewBox="0 0 12 8"><path d="M0.5 1H11.5L6 7z" fill="#333"/></svg>
<div class="t" style="left:975.00px;top:518.02px;font-size:17.46px;line-height:17.46px;color:#262626;transform:scaleX(1.1410);transform-origin:0 0;">Province</div>
<svg style="left:1075.00px;top:522.00px;" width="12" height="8" viewBox="0 0 12 8"><path d="M0.5 1H11.5L6 7z" fill="#333"/></svg>
<div class="t" style="left:1134.00px;top:518.02px;font-size:17.46px;line-height:17.46px;color:#262626;transform:scaleX(1.1389);transform-origin:0 0;">Area</div>
<svg style="left:1216.00px;top:522.00px;" width="12" height="8" viewBox="0 0 12 8"><path d="M0.5 1H11.5L6 7z" fill="#333"/></svg>
<div class="t" style="left:1245.50px;top:518.02px;font-size:17.46px;line-height:17.46px;color:#262626;transform:scaleX(1.1998);transform-origin:0 0;">Population</div>
<svg style="left:1356.50px;top:522.00px;" width="12" height="8" viewBox="0 0 12 8"><path d="M0.5 1H11.5L6 7z" fill="#333"/></svg>
<div class="t" style="left:1382.00px;top:518.02px;font-size:17.46px;line-height:17.46px;color:#262626;transform:scaleX(1.1135);transform-origin:0 0;font-style:italic;">Click to Add</div>
<svg style="left:1501.00px;top:522.00px;" width="12" height="8" viewBox="0 0 12 8"><path d="M0.5 1H11.5L6 7z" fill="#333"/></svg>
<div style="left:511.50px;top:539.40px;width:1009.50px;height:29.35px;background:#ffffff;"></div>
<div style="left:673.90px;top:539.40px;width:847.10px;height:29.35px;background:#b8dcff;"></div>
<div style="left:485.50px;top:539.40px;width:26.00px;height:29.35px;background:#fdd862;"></div>
<div style="left:485.50px;top:567.55px;width:26.00px;height:1.20px;background:#b5bcc6;"></div>
<div style="left:511.50px;top:567.75px;width:1009.50px;height:1.00px;background:#ebe8de;"></div>
<div style="left:533.50px;top:539.40px;width:1.00px;height:29.35px;background:#ebe8de;"></div>
<div style="left:673.90px;top:539.40px;width:1.00px;height:29.35px;background:#ebe8de;"></div>
<div style="left:814.30px;top:539.40px;width:1.00px;height:29.35px;background:#ebe8de;"></div>
<div style="left:954.70px;top:539.40px;width:1.00px;height:29.35px;background:#ebe8de;"></div>
<div style="left:1095.10px;top:539.40px;width:1.00px;height:29.35px;background:#ebe8de;"></div>
<div style="left:1235.50px;top:539.40px;width:1.00px;height:29.35px;background:#ebe8de;"></div>
<div style="left:1375.90px;top:539.40px;width:1.00px;height:29.35px;background:#ebe8de;"></div>
<svg style="left:516.50px;top:548.40px;" width="13" height="13" viewBox="0 0 13 13"><rect x="0.6" y="0.6" width="11.8" height="11.8" fill="#fff" stroke="#9a9a9a" stroke-width="1.2"/><path d="M3 6.5H10M6.5 3V10" stroke="#000" stroke-width="1.6"/></svg>
<div style="left:533.50px;top:538.90px;width:141.50px;height:30.35px;background:#ffffff;box-shadow:inset 0 0 0 2px #f5a6ab;"></div>
<div style="left:538.70px;top:542.60px;width:64.00px;height:26.00px;background:#000000;"></div>
<div style="left:533.50px;top:543.90px;width:138.50px;height:25.60px;overflow:hidden;"><div class="t" style="position:absolute;left:5px;top:3px;font-size:17.60px;line-height:17.60px;color:#ffffff;transform:scaleX(1.12);transform-origin:0 0;">Austria</div></div>
<div style="left:673.90px;top:543.90px;width:139.90px;height:25.60px;overflow:hidden;"><div class="t" style="position:absolute;left:5px;top:3px;font-size:17.60px;line-height:17.60px;color:#222222;transform:scaleX(1.12);transform-origin:0 0;">A</div></div>
<div style="left:814.30px;top:543.90px;width:139.90px;height:25.60px;overflow:hidden;"><div class="t" style="position:absolute;left:5px;top:3px;font-size:17.60px;line-height:17.60px;color:#222222;transform:scaleX(1.12);transform-origin:0 0;">Vienna</div></div>
<div style="left:954.70px;top:543.90px;width:139.90px;height:25.60px;overflow:hidden;"><div class="t" style="position:absolute;left:5px;top:3px;font-size:17.60px;line-height:17.60px;color:#222222;transform:scaleX(1.12);transform-origin:0 0;">Vienna-Wien</div></div>
<div class="t" style="left:1184.06px;top:547.70px;font-size:17.60px;line-height:17.60px;color:#1a1a1a;transform:scaleX(1.0400);transform-origin:100% 0;">83850</div>
<div class="t" style="left:1304.99px;top:547.70px;font-size:17.60px;line-height:17.60px;color:#1a1a1a;transform:scaleX(1.0400);transform-origin:100% 0;">8023244</div>
<div style="left:511.50px;top:568.75px;width:1009.50px;height:29.35px;background:#f2f2f2;"></div>
<div style="left:485.50px;top:568.75px;width:26.00px;height:29.35px;background:#dfe3e8;"></div>
<div style="left:485.50px;top:596.90px;width:26.00px;height:1.20px;background:#b5bcc6;"></div>
<div style="left:511.50px;top:597.10px;width:1009.50px;height:1.00px;background:#ebe8de;"></div>
<div style="left:533.50px;top:568.75px;width:1.00px;height:29.35px;background:#ebe8de;"></div>
<div style="left:673.90px;top:568.75px;width:1.00px;height:29.35px;background:#ebe8de;"></div>
<div style="left:814.30px;top:568.75px;width:1.00px;height:29.35px;background:#ebe8de;"></div>
<div style="left:954.70px;top:568.75px;width:1.00px;height:29.35px;background:#ebe8de;"></div>
<div style="left:1095.10px;top:568.75px;width:1.00px;height:29.35px;background:#ebe8de;"></div>
<div style="left:1235.50px;top:568.75px;width:1.00px;height:29.35px;background:#ebe8de;"></div>
<div style="left:1375.90px;top:568.75px;width:1.00px;height:29.35px;background:#ebe8de;"></div>
<svg style="left:516.50px;top:577.75px;" width="13" height="13" viewBox="0 0 13 13"><rect x="0.6" y="0.6" width="11.8" height="11.8" fill="#fff" stroke="#9a9a9a" stroke-width="1.2"/><path d="M3 6.5H10M6.5 3V10" stroke="#000" stroke-width="1.6"/></svg>
<div style="left:533.50px;top:573.25px;width:139.90px;height:25.60px;overflow:hidden;"><div class="t" style="position:absolute;left:5px;top:3px;font-size:17.60px;line-height:17.60px;color:#222222;transform:scaleX(1.12);transform-origin:0 0;">Afghanistan</div></div>
<div style="left:673.90px;top:573.25px;width:139.90px;height:25.60px;overflow:hidden;"><div class="t" style="position:absolute;left:5px;top:3px;font-size:17.60px;line-height:17.60px;color:#222222;transform:scaleX(1.12);transform-origin:0 0;">AFG</div></div>
<div style="left:814.30px;top:573.25px;width:139.90px;height:25.60px;overflow:hidden;"><div class="t" style="position:absolute;left:5px;top:3px;font-size:17.60px;line-height:17.60px;color:#222222;transform:scaleX(1.12);transform-origin:0 0;">Kabul</div></div>
<div style="left:954.70px;top:573.25px;width:139.90px;height:25.60px;overflow:hidden;"><div class="t" style="position:absolute;left:5px;top:3px;font-size:17.60px;line-height:17.60px;color:#222222;transform:scaleX(1.12);transform-origin:0 0;">Afghanistan</div></div>
<div class="t" style="left:1174.28px;top:577.05px;font-size:17.60px;line-height:17.60px;color:#1a1a1a;transform:scaleX(1.0400);transform-origin:100% 0;">647500</div>
<div class="t" style="left:1295.20px;top:577.05px;font-size:17.60px;line-height:17.60px;color:#1a1a1a;transform:scaleX(1.0400);transform-origin:100% 0;">22664136</div>
<div style="left:511.50px;top:598.10px;width:1009.50px;height:29.35px;background:#ffffff;"></div>
<div style="left:485.50px;top:598.10px;width:26.00px;height:29.35px;background:#dfe3e8;"></div>
<div style="left:485.50px;top:626.25px;width:26.00px;height:1.20px;background:#b5bcc6;"></div>
<div style="left:511.50px;top:626.45px;width:1009.50px;height:1.00px;background:#ebe8de;"></div>
<div style="left:533.50px;top:598.10px;width:1.00px;height:29.35px;background:#ebe8de;"></div>
<div style="left:673.90px;top:598.10px;width:1.00px;height:29.35px;background:#ebe8de;"></div>
<div style="left:814.30px;top:598.10px;width:1.00px;height:29.35px;background:#ebe8de;"></div>
<div style="left:954.70px;top:598.10px;width:1.00px;height:29.35px;background:#ebe8de;"></div>
<div style="left:1095.10px;top:598.10px;width:1.00px;height:29.35px;background:#ebe8de;"></div>
<div style="left:1235.50px;top:598.10px;width:1.00px;height:29.35px;background:#ebe8de;"></div>
<div style="left:1375.90px;top:598.10px;width:1.00px;height:29.35px;background:#ebe8de;"></div>
<svg style="left:516.50px;top:607.10px;" width="13" height="13" viewBox="0 0 13 13"><rect x="0.6" y="0.6" width="11.8" height="11.8" fill="#fff" stroke="#9a9a9a" stroke-width="1.2"/><path d="M3 6.5H10M6.5 3V10" stroke="#000" stroke-width="1.6"/></svg>
<div style="left:533.50px;top:602.60px;width:139.90px;height:25.60px;overflow:hidden;"><div class="t" style="position:absolute;left:5px;top:3px;font-size:17.60px;line-height:17.60px;color:#222222;transform:scaleX(1.12);transform-origin:0 0;">Antigua and Barbuda</div></div>
<div style="left:673.90px;top:602.60px;width:139.90px;height:25.60px;overflow:hidden;"><div class="t" style="position:absolute;left:5px;top:3px;font-size:17.60px;line-height:17.60px;color:#222222;transform:scaleX(1.12);transform-origin:0 0;">AG</div></div>
<div style="left:814.30px;top:602.60px;width:139.90px;height:25.60px;overflow:hidden;"><div class="t" style="position:absolute;left:5px;top:3px;font-size:17.60px;line-height:17.60px;color:#222222;transform:scaleX(1.12);transform-origin:0 0;">Saint Johns</div></div>
<div style="left:954.70px;top:602.60px;width:139.90px;height:25.60px;overflow:hidden;"><div class="t" style="position:absolute;left:5px;top:3px;font-size:17.60px;line-height:17.60px;color:#222222;transform:scaleX(1.12);transform-origin:0 0;">Antigua and Barbuda</div></div>
<div class="t" style="left:1203.64px;top:606.40px;font-size:17.60px;line-height:17.60px;color:#1a1a1a;transform:scaleX(1.0400);transform-origin:100% 0;">442</div>
<div class="t" style="left:1324.56px;top:606.40px;font-size:17.60px;line-height:17.60px;color:#1a1a1a;transform:scaleX(1.0400);transform-origin:100% 0;">65647</div>
<div style="left:511.50px;top:627.45px;width:1009.50px;height:29.35px;background:#f2f2f2;"></div>
<div style="left:485.50px;top:627.45px;width:26.00px;height:29.35px;background:#dfe3e8;"></div>
<div style="left:485.50px;top:655.60px;width:26.00px;height:1.20px;background:#b5bcc6;"></div>
<div style="left:511.50px;top:655.80px;width:1009.50px;height:1.00px;background:#ebe8de;"></div>
<div style="left:533.50px;top:627.45px;width:1.00px;height:29.35px;background:#ebe8de;"></div>
<div style="left:673.90px;top:627.45px;width:1.00px;height:29.35px;background:#ebe8de;"></div>
<div style="left:814.30px;top:627.45px;width:1.00px;height:29.35px;background:#ebe8de;"></div>
<div style="left:954.70px;top:627.45px;width:1.00px;height:29.35px;background:#ebe8de;"></div>
<div style="left:1095.10px;top:627.45px;width:1.00px;height:29.35px;background:#ebe8de;"></div>
<div style="left:1235.50px;top:627.45px;width:1.00px;height:29.35px;background:#ebe8de;"></div>
<div style="left:1375.90px;top:627.45px;width:1.00px;height:29.35px;background:#ebe8de;"></div>
<svg style="left:516.50px;top:636.45px;" width="13" height="13" viewBox="0 0 13 13"><rect x="0.6" y="0.6" width="11.8" height="11.8" fill="#fff" stroke="#9a9a9a" stroke-width="1.2"/><path d="M3 6.5H10M6.5 3V10" stroke="#000" stroke-width="1.6"/></svg>
<div style="left:533.50px;top:631.95px;width:139.90px;height:25.60px;overflow:hidden;"><div class="t" style="position:absolute;left:5px;top:3px;font-size:17.60px;line-height:17.60px;color:#222222;transform:scaleX(1.12);transform-origin:0 0;">Albania</div></div>
<div style="left:673.90px;top:631.95px;width:139.90px;height:25.60px;overflow:hidden;"><div class="t" style="position:absolute;left:5px;top:3px;font-size:17.60px;line-height:17.60px;color:#222222;transform:scaleX(1.12);transform-origin:0 0;">AL</div></div>
<div style="left:814.30px;top:631.95px;width:139.90px;height:25.60px;overflow:hidden;"><div class="t" style="position:absolute;left:5px;top:3px;font-size:17.60px;line-height:17.60px;color:#222222;transform:scaleX(1.12);transform-origin:0 0;">Tirane</div></div>
<div style="left:954.70px;top:631.95px;width:139.90px;height:25.60px;overflow:hidden;"><div class="t" style="position:absolute;left:5px;top:3px;font-size:17.60px;line-height:17.60px;color:#222222;transform:scaleX(1.12);transform-origin:0 0;">Albania</div></div>
<div class="t" style="left:1184.06px;top:635.75px;font-size:17.60px;line-height:17.60px;color:#1a1a1a;transform:scaleX(1.0400);transform-origin:100% 0;">28750</div>
<div class="t" style="left:1304.99px;top:635.75px;font-size:17.60px;line-height:17.60px;color:#1a1a1a;transform:scaleX(1.0400);transform-origin:100% 0;">3249136</div>
<div style="left:511.50px;top:656.80px;width:1009.50px;height:29.35px;background:#ffffff;"></div>
<div style="left:485.50px;top:656.80px;width:26.00px;height:29.35px;background:#dfe3e8;"></div>
<div style="left:485.50px;top:684.95px;width:26.00px;height:1.20px;background:#b5bcc6;"></div>
<div style="left:511.50px;top:685.15px;width:1009.50px;height:1.00px;background:#ebe8de;"></div>
<div style="left:533.50px;top:656.80px;width:1.00px;height:29.35px;background:#ebe8de;"></div>
<div style="left:673.90px;top:656.80px;width:1.00px;height:29.35px;background:#ebe8de;"></div>
<div style="left:814.30px;top:656.80px;width:1.00px;height:29.35px;background:#ebe8de;"></div>
<div style="left:954.70px;top:656.80px;width:1.00px;height:29.35px;background:#ebe8de;"></div>
<div style="left:1095.10px;top:656.80px;width:1.00px;height:29.35px;background:#ebe8de;"></div>
<div style="left:1235.50px;top:656.80px;width:1.00px;height:29.35px;background:#ebe8de;"></div>
<div style="left:1375.90px;top:656.80px;width:1.00px;height:29.35px;background:#ebe8de;"></div>
<svg style="left:516.50px;top:665.80px;" width="13" height="13" viewBox="0 0 13 13"><rect x="0.6" y="0.6" width="11.8" height="11.8" fill="#fff" stroke="#9a9a9a" stroke-width="1.2"/><path d="M3 6.5H10M6.5 3V10" stroke="#000" stroke-width="1.6"/></svg>
<div style="left:533.50px;top:661.30px;width:139.90px;height:25.60px;overflow:hidden;"><div class="t" style="position:absolute;left:5px;top:3px;font-size:17.60px;line-height:17.60px;color:#222222;transform:scaleX(1.12);transform-origin:0 0;">American Samoa</div></div>
<div style="left:673.90px;top:661.30px;width:139.90px;height:25.60px;overflow:hidden;"><div class="t" style="position:absolute;left:5px;top:3px;font-size:17.60px;line-height:17.60px;color:#222222;transform:scaleX(1.12);transform-origin:0 0;">AMSA</div></div>
<div style="left:814.30px;top:661.30px;width:139.90px;height:25.60px;overflow:hidden;"><div class="t" style="position:absolute;left:5px;top:3px;font-size:17.60px;line-height:17.60px;color:#222222;transform:scaleX(1.12);transform-origin:0 0;">Pago Pago</div></div>
<div style="left:954.70px;top:661.30px;width:139.90px;height:25.60px;overflow:hidden;"><div class="t" style="position:absolute;left:5px;top:3px;font-size:17.60px;line-height:17.60px;color:#222222;transform:scaleX(1.12);transform-origin:0 0;">American Samoa</div></div>
<div class="t" style="left:1203.64px;top:665.10px;font-size:17.60px;line-height:17.60px;color:#1a1a1a;transform:scaleX(1.0400);transform-origin:100% 0;">199</div>
<div class="t" style="left:1324.56px;top:665.10px;font-size:17.60px;line-height:17.60px;color:#1a1a1a;transform:scaleX(1.0400);transform-origin:100% 0;">65628</div>
<div style="left:511.50px;top:686.15px;width:1009.50px;height:29.35px;background:#f2f2f2;"></div>
<div style="left:485.50px;top:686.15px;width:26.00px;height:29.35px;background:#dfe3e8;"></div>
<div style="left:485.50px;top:714.30px;width:26.00px;height:1.20px;background:#b5bcc6;"></div>
<div style="left:511.50px;top:714.50px;width:1009.50px;height:1.00px;background:#ebe8de;"></div>
<div style="left:533.50px;top:686.15px;width:1.00px;height:29.35px;background:#ebe8de;"></div>
<div style="left:673.90px;top:686.15px;width:1.00px;height:29.35px;background:#ebe8de;"></div>
<div style="left:814.30px;top:686.15px;width:1.00px;height:29.35px;background:#ebe8de;"></div>
<div style="left:954.70px;top:686.15px;width:1.00px;height:29.35px;background:#ebe8de;"></div>
<div style="left:1095.10px;top:686.15px;width:1.00px;height:29.35px;background:#ebe8de;"></div>
<div style="left:1235.50px;top:686.15px;width:1.00px;height:29.35px;background:#ebe8de;"></div>
<div style="left:1375.90px;top:686.15px;width:1.00px;height:29.35px;background:#ebe8de;"></div>
<svg style="left:516.50px;top:695.15px;" width="13" height="13" viewBox="0 0 13 13"><rect x="0.6" y="0.6" width="11.8" height="11.8" fill="#fff" stroke="#9a9a9a" stroke-width="1.2"/><path d="M3 6.5H10M6.5 3V10" stroke="#000" stroke-width="1.6"/></svg>
<div style="left:533.50px;top:690.65px;width:139.90px;height:25.60px;overflow:hidden;"><div class="t" style="position:absolute;left:5px;top:3px;font-size:17.60px;line-height:17.60px;color:#222222;transform:scaleX(1.12);transform-origin:0 0;">Andorra</div></div>
<div style="left:673.90px;top:690.65px;width:139.90px;height:25.60px;overflow:hidden;"><div class="t" style="position:absolute;left:5px;top:3px;font-size:17.60px;line-height:17.60px;color:#222222;transform:scaleX(1.12);transform-origin:0 0;">AND</div></div>
<div style="left:814.30px;top:690.65px;width:139.90px;height:25.60px;overflow:hidden;"><div class="t" style="position:absolute;left:5px;top:3px;font-size:17.60px;line-height:17.60px;color:#222222;transform:scaleX(1.12);transform-origin:0 0;">Andorra la Vella</div></div>
<div style="left:954.70px;top:690.65px;width:139.90px;height:25.60px;overflow:hidden;"><div class="t" style="position:absolute;left:5px;top:3px;font-size:17.60px;line-height:17.60px;color:#222222;transform:scaleX(1.12);transform-origin:0 0;">Andorra</div></div>
<div class="t" style="left:1203.64px;top:694.45px;font-size:17.60px;line-height:17.60px;color:#1a1a1a;transform:scaleX(1.0400);transform-origin:100% 0;">450</div>
<div class="t" style="left:1324.56px;top:694.45px;font-size:17.60px;line-height:17.60px;color:#1a1a1a;transform:scaleX(1.0400);transform-origin:100% 0;">72766</div>
<div style="left:511.50px;top:715.50px;width:1009.50px;height:29.35px;background:#ffffff;"></div>
<div style="left:485.50px;top:715.50px;width:26.00px;height:29.35px;background:#dfe3e8;"></div>
<div style="left:485.50px;top:743.65px;width:26.00px;height:1.20px;background:#b5bcc6;"></div>
<div style="left:511.50px;top:743.85px;width:1009.50px;height:1.00px;background:#ebe8de;"></div>
<div style="left:533.50px;top:715.50px;width:1.00px;height:29.35px;background:#ebe8de;"></div>
<div style="left:673.90px;top:715.50px;width:1.00px;height:29.35px;background:#ebe8de;"></div>
<div style="left:814.30px;top:715.50px;width:1.00px;height:29.35px;background:#ebe8de;"></div>
<div style="left:954.70px;top:715.50px;width:1.00px;height:29.35px;background:#ebe8de;"></div>
<div style="left:1095.10px;top:715.50px;width:1.00px;height:29.35px;background:#ebe8de;"></div>
<div style="left:1235.50px;top:715.50px;width:1.00px;height:29.35px;background:#ebe8de;"></div>
<div style="left:1375.90px;top:715.50px;width:1.00px;height:29.35px;background:#ebe8de;"></div>
<svg style="left:516.50px;top:724.50px;" width="13" height="13" viewBox="0 0 13 13"><rect x="0.6" y="0.6" width="11.8" height="11.8" fill="#fff" stroke="#9a9a9a" stroke-width="1.2"/><path d="M3 6.5H10M6.5 3V10" stroke="#000" stroke-width="1.6"/></svg>
<div style="left:533.50px;top:720.00px;width:139.90px;height:25.60px;overflow:hidden;"><div class="t" style="position:absolute;left:5px;top:3px;font-size:17.60px;line-height:17.60px;color:#222222;transform:scaleX(1.12);transform-origin:0 0;">Angola</div></div>
<div style="left:673.90px;top:720.00px;width:139.90px;height:25.60px;overflow:hidden;"><div class="t" style="position:absolute;left:5px;top:3px;font-size:17.60px;line-height:17.60px;color:#222222;transform:scaleX(1.12);transform-origin:0 0;">ANG</div></div>
<div style="left:814.30px;top:720.00px;width:139.90px;height:25.60px;overflow:hidden;"><div class="t" style="position:absolute;left:5px;top:3px;font-size:17.60px;line-height:17.60px;color:#222222;transform:scaleX(1.12);transform-origin:0 0;">Luanda</div></div>
<div style="left:954.70px;top:720.00px;width:139.90px;height:25.60px;overflow:hidden;"><div class="t" style="position:absolute;left:5px;top:3px;font-size:17.60px;line-height:17.60px;color:#222222;transform:scaleX(1.12);transform-origin:0 0;">Luanda</div></div>
<div class="t" style="left:1164.49px;top:723.80px;font-size:17.60px;line-height:17.60px;color:#1a1a1a;transform:scaleX(1.0400);transform-origin:100% 0;">1246700</div>
<div class="t" style="left:1295.20px;top:723.80px;font-size:17.60px;line-height:17.60px;color:#1a1a1a;transform:scaleX(1.0400);transform-origin:100% 0;">10342899</div>
<div style="left:511.50px;top:744.85px;width:1009.50px;height:29.35px;background:#f2f2f2;"></div>
<div style="left:485.50px;top:744.85px;width:26.00px;height:29.35px;background:#dfe3e8;"></div>
<div style="left:485.50px;top:773.00px;width:26.00px;height:1.20px;background:#b5bcc6;"></div>
<div style="left:511.50px;top:773.20px;width:1009.50px;height:1.00px;background:#ebe8de;"></div>
<div style="left:533.50px;top:744.85px;width:1.00px;height:29.35px;background:#ebe8de;"></div>
<div style="left:673.90px;top:744.85px;width:1.00px;height:29.35px;background:#ebe8de;"></div>
<div style="left:814.30px;top:744.85px;width:1.00px;height:29.35px;background:#ebe8de;"></div>
<div style="left:954.70px;top:744.85px;width:1.00px;height:29.35px;background:#ebe8de;"></div>
<div style="left:1095.10px;top:744.85px;width:1.00px;height:29.35px;background:#ebe8de;"></div>
<div style="left:1235.50px;top:744.85px;width:1.00px;height:29.35px;background:#ebe8de;"></div>
<div style="left:1375.90px;top:744.85px;width:1.00px;height:29.35px;background:#ebe8de;"></div>
<svg style="left:516.50px;top:753.85px;" width="13" height="13" viewBox="0 0 13 13"><rect x="0.6" y="0.6" width="11.8" height="11.8" fill="#fff" stroke="#9a9a9a" stroke-width="1.2"/><path d="M3 6.5H10M6.5 3V10" stroke="#000" stroke-width="1.6"/></svg>
<div style="left:533.50px;top:749.35px;width:139.90px;height:25.60px;overflow:hidden;"><div class="t" style="position:absolute;left:5px;top:3px;font-size:17.60px;line-height:17.60px;color:#222222;transform:scaleX(1.12);transform-origin:0 0;">Armenia</div></div>
<div style="left:673.90px;top:749.35px;width:139.90px;height:25.60px;overflow:hidden;"><div class="t" style="position:absolute;left:5px;top:3px;font-size:17.60px;line-height:17.60px;color:#222222;transform:scaleX(1.12);transform-origin:0 0;">ARM</div></div>
<div style="left:814.30px;top:749.35px;width:139.90px;height:25.60px;overflow:hidden;"><div class="t" style="position:absolute;left:5px;top:3px;font-size:17.60px;line-height:17.60px;color:#222222;transform:scaleX(1.12);transform-origin:0 0;">Yerevan</div></div>
<div style="left:954.70px;top:749.35px;width:139.90px;height:25.60px;overflow:hidden;"><div class="t" style="position:absolute;left:5px;top:3px;font-size:17.60px;line-height:17.60px;color:#222222;transform:scaleX(1.12);transform-origin:0 0;">Armenia</div></div>
<div class="t" style="left:1184.06px;top:753.15px;font-size:17.60px;line-height:17.60px;color:#1a1a1a;transform:scaleX(1.0400);transform-origin:100% 0;">29800</div>
<div class="t" style="left:1304.99px;top:753.15px;font-size:17.60px;line-height:17.60px;color:#1a1a1a;transform:scaleX(1.0400);transform-origin:100% 0;">3463574</div>
<div style="left:511.50px;top:774.20px;width:1009.50px;height:29.35px;background:#ffffff;"></div>
<div style="left:485.50px;top:774.20px;width:26.00px;height:29.35px;background:#dfe3e8;"></div>
<div style="left:485.50px;top:802.35px;width:26.00px;height:1.20px;background:#b5bcc6;"></div>
<div style="left:511.50px;top:802.55px;width:1009.50px;height:1.00px;background:#ebe8de;"></div>
<div style="left:533.50px;top:774.20px;width:1.00px;height:29.35px;background:#ebe8de;"></div>
<div style="left:673.90px;top:774.20px;width:1.00px;height:29.35px;background:#ebe8de;"></div>
<div style="left:814.30px;top:774.20px;width:1.00px;height:29.35px;background:#ebe8de;"></div>
<div style="left:954.70px;top:774.20px;width:1.00px;height:29.35px;background:#ebe8de;"></div>
<div style="left:1095.10px;top:774.20px;width:1.00px;height:29.35px;background:#ebe8de;"></div>
<div style="left:1235.50px;top:774.20px;width:1.00px;height:29.35px;background:#ebe8de;"></div>
<div style="left:1375.90px;top:774.20px;width:1.00px;height:29.35px;background:#ebe8de;"></div>
<svg style="left:516.50px;top:783.20px;" width="13" height="13" viewBox="0 0 13 13"><rect x="0.6" y="0.6" width="11.8" height="11.8" fill="#fff" stroke="#9a9a9a" stroke-width="1.2"/><path d="M3 6.5H10M6.5 3V10" stroke="#000" stroke-width="1.6"/></svg>
<div style="left:533.50px;top:778.70px;width:139.90px;height:25.60px;overflow:hidden;"><div class="t" style="position:absolute;left:5px;top:3px;font-size:17.60px;line-height:17.60px;color:#222222;transform:scaleX(1.12);transform-origin:0 0;">Aruba</div></div>
<div style="left:673.90px;top:778.70px;width:139.90px;height:25.60px;overflow:hidden;"><div class="t" style="position:absolute;left:5px;top:3px;font-size:17.60px;line-height:17.60px;color:#222222;transform:scaleX(1.12);transform-origin:0 0;">ARU</div></div>
<div style="left:814.30px;top:778.70px;width:139.90px;height:25.60px;overflow:hidden;"><div class="t" style="position:absolute;left:5px;top:3px;font-size:17.60px;line-height:17.60px;color:#222222;transform:scaleX(1.12);transform-origin:0 0;">Oranjestad</div></div>
<div style="left:954.70px;top:778.70px;width:139.90px;height:25.60px;overflow:hidden;"><div class="t" style="position:absolute;left:5px;top:3px;font-size:17.60px;line-height:17.60px;color:#222222;transform:scaleX(1.12);transform-origin:0 0;">Aruba</div></div>
<div class="t" style="left:1203.64px;top:782.50px;font-size:17.60px;line-height:17.60px;color:#1a1a1a;transform:scaleX(1.0400);transform-origin:100% 0;">193</div>
<div class="t" style="left:1314.78px;top:782.50px;font-size:17.60px;line-height:17.60px;color:#1a1a1a;transform:scaleX(1.0400);transform-origin:100% 0;">103065</div>
<div style="left:511.50px;top:803.55px;width:1009.50px;height:29.35px;background:#f2f2f2;"></div>
<div style="left:485.50px;top:803.55px;width:26.00px;height:29.35px;background:#dfe3e8;"></div>
<div style="left:485.50px;top:831.70px;width:26.00px;height:1.20px;background:#b5bcc6;"></div>
<div style="left:511.50px;top:831.90px;width:1009.50px;height:1.00px;background:#ebe8de;"></div>
<div style="left:533.50px;top:803.55px;width:1.00px;height:29.35px;background:#ebe8de;"></div>
<div style="left:673.90px;top:803.55px;width:1.00px;height:29.35px;background:#ebe8de;"></div>
<div style="left:814.30px;top:803.55px;width:1.00px;height:29.35px;background:#ebe8de;"></div>
<div style="left:954.70px;top:803.55px;width:1.00px;height:29.35px;background:#ebe8de;"></div>
<div style="left:1095.10px;top:803.55px;width:1.00px;height:29.35px;background:#ebe8de;"></div>
<div style="left:1235.50px;top:803.55px;width:1.00px;height:29.35px;background:#ebe8de;"></div>
<div style="left:1375.90px;top:803.55px;width:1.00px;height:29.35px;background:#ebe8de;"></div>
<svg style="left:516.50px;top:812.55px;" width="13" height="13" viewBox="0 0 13 13"><rect x="0.6" y="0.6" width="11.8" height="11.8" fill="#fff" stroke="#9a9a9a" stroke-width="1.2"/><path d="M3 6.5H10M6.5 3V10" stroke="#000" stroke-width="1.6"/></svg>
<div style="left:533.50px;top:808.05px;width:139.90px;height:25.60px;overflow:hidden;"><div class="t" style="position:absolute;left:5px;top:3px;font-size:17.60px;line-height:17.60px;color:#222222;transform:scaleX(1.12);transform-origin:0 0;">Australia</div></div>
<div style="left:673.90px;top:808.05px;width:139.90px;height:25.60px;overflow:hidden;"><div class="t" style="position:absolute;left:5px;top:3px;font-size:17.60px;line-height:17.60px;color:#222222;transform:scaleX(1.12);transform-origin:0 0;">AUS</div></div>
<div style="left:814.30px;top:808.05px;width:139.90px;height:25.60px;overflow:hidden;"><div class="t" style="position:absolute;left:5px;top:3px;font-size:17.60px;line-height:17.60px;color:#222222;transform:scaleX(1.12);transform-origin:0 0;">Canberra</div></div>
<div style="left:954.70px;top:808.05px;width:139.90px;height:25.60px;overflow:hidden;"><div class="t" style="position:absolute;left:5px;top:3px;font-size:17.60px;line-height:17.60px;color:#222222;transform:scaleX(1.12);transform-origin:0 0;">Australia Capital Territory</div></div>
<div class="t" style="left:1164.49px;top:811.85px;font-size:17.60px;line-height:17.60px;color:#1a1a1a;transform:scaleX(1.0400);transform-origin:100% 0;">7686850</div>
<div class="t" style="left:1295.20px;top:811.85px;font-size:17.60px;line-height:17.60px;color:#1a1a1a;transform:scaleX(1.0400);transform-origin:100% 0;">18260863</div>
<div style="left:511.50px;top:832.90px;width:1009.50px;height:29.35px;background:#ffffff;"></div>
<div style="left:485.50px;top:832.90px;width:26.00px;height:29.35px;background:#dfe3e8;"></div>
<div style="left:485.50px;top:861.05px;width:26.00px;height:1.20px;background:#b5bcc6;"></div>
<div style="left:511.50px;top:861.25px;width:1009.50px;height:1.00px;background:#ebe8de;"></div>
<div style="left:533.50px;top:832.90px;width:1.00px;height:29.35px;background:#ebe8de;"></div>
<div style="left:673.90px;top:832.90px;width:1.00px;height:29.35px;background:#ebe8de;"></div>
<div style="left:814.30px;top:832.90px;width:1.00px;height:29.35px;background:#ebe8de;"></div>
<div style="left:954.70px;top:832.90px;width:1.00px;height:29.35px;background:#ebe8de;"></div>
<div style="left:1095.10px;top:832.90px;width:1.00px;height:29.35px;background:#ebe8de;"></div>
<div style="left:1235.50px;top:832.90px;width:1.00px;height:29.35px;background:#ebe8de;"></div>
<div style="left:1375.90px;top:832.90px;width:1.00px;height:29.35px;background:#ebe8de;"></div>
<svg style="left:516.50px;top:841.90px;" width="13" height="13" viewBox="0 0 13 13"><rect x="0.6" y="0.6" width="11.8" height="11.8" fill="#fff" stroke="#9a9a9a" stroke-width="1.2"/><path d="M3 6.5H10M6.5 3V10" stroke="#000" stroke-width="1.6"/></svg>
<div style="left:533.50px;top:837.40px;width:139.90px;height:25.60px;overflow:hidden;"><div class="t" style="position:absolute;left:5px;top:3px;font-size:17.60px;line-height:17.60px;color:#222222;transform:scaleX(1.12);transform-origin:0 0;">Anguilla</div></div>
<div style="left:673.90px;top:837.40px;width:139.90px;height:25.60px;overflow:hidden;"><div class="t" style="position:absolute;left:5px;top:3px;font-size:17.60px;line-height:17.60px;color:#222222;transform:scaleX(1.12);transform-origin:0 0;">AXA</div></div>
<div style="left:814.30px;top:837.40px;width:139.90px;height:25.60px;overflow:hidden;"><div class="t" style="position:absolute;left:5px;top:3px;font-size:17.60px;line-height:17.60px;color:#222222;transform:scaleX(1.12);transform-origin:0 0;">The Valley</div></div>
<div style="left:954.70px;top:837.40px;width:139.90px;height:25.60px;overflow:hidden;"><div class="t" style="position:absolute;left:5px;top:3px;font-size:17.60px;line-height:17.60px;color:#222222;transform:scaleX(1.12);transform-origin:0 0;">Anguilla</div></div>
<div class="t" style="left:1203.64px;top:841.20px;font-size:17.60px;line-height:17.60px;color:#1a1a1a;transform:scaleX(1.0400);transform-origin:100% 0;">102</div>
<div class="t" style="left:1324.56px;top:841.20px;font-size:17.60px;line-height:17.60px;color:#1a1a1a;transform:scaleX(1.0400);transform-origin:100% 0;">14436</div>
<div style="left:511.50px;top:862.25px;width:1009.50px;height:29.35px;background:#f2f2f2;"></div>
<div style="left:485.50px;top:862.25px;width:26.00px;height:29.35px;background:#dfe3e8;"></div>
<div style="left:485.50px;top:890.40px;width:26.00px;height:1.20px;background:#b5bcc6;"></div>
<div style="left:511.50px;top:890.60px;width:1009.50px;height:1.00px;background:#ebe8de;"></div>
<div style="left:533.50px;top:862.25px;width:1.00px;height:29.35px;background:#ebe8de;"></div>
<div style="left:673.90px;top:862.25px;width:1.00px;height:29.35px;background:#ebe8de;"></div>
<div style="left:814.30px;top:862.25px;width:1.00px;height:29.35px;background:#ebe8de;"></div>
<div style="left:954.70px;top:862.25px;width:1.00px;height:29.35px;background:#ebe8de;"></div>
<div style="left:1095.10px;top:862.25px;width:1.00px;height:29.35px;background:#ebe8de;"></div>
<div style="left:1235.50px;top:862.25px;width:1.00px;height:29.35px;background:#ebe8de;"></div>
<div style="left:1375.90px;top:862.25px;width:1.00px;height:29.35px;background:#ebe8de;"></div>
<svg style="left:516.50px;top:871.25px;" width="13" height="13" viewBox="0 0 13 13"><rect x="0.6" y="0.6" width="11.8" height="11.8" fill="#fff" stroke="#9a9a9a" stroke-width="1.2"/><path d="M3 6.5H10M6.5 3V10" stroke="#000" stroke-width="1.6"/></svg>
<div style="left:533.50px;top:866.75px;width:139.90px;height:25.60px;overflow:hidden;"><div class="t" style="position:absolute;left:5px;top:3px;font-size:17.60px;line-height:17.60px;color:#222222;transform:scaleX(1.12);transform-origin:0 0;">Azerbaijan</div></div>
<div style="left:673.90px;top:866.75px;width:139.90px;height:25.60px;overflow:hidden;"><div class="t" style="position:absolute;left:5px;top:3px;font-size:17.60px;line-height:17.60px;color:#222222;transform:scaleX(1.12);transform-origin:0 0;">AZ</div></div>
<div style="left:814.30px;top:866.75px;width:139.90px;height:25.60px;overflow:hidden;"><div class="t" style="position:absolute;left:5px;top:3px;font-size:17.60px;line-height:17.60px;color:#222222;transform:scaleX(1.12);transform-origin:0 0;">Baku</div></div>
<div style="left:954.70px;top:866.75px;width:139.90px;height:25.60px;overflow:hidden;"><div class="t" style="position:absolute;left:5px;top:3px;font-size:17.60px;line-height:17.60px;color:#222222;transform:scaleX(1.12);transform-origin:0 0;">Azerbaijan</div></div>
<div class="t" style="left:1184.06px;top:870.55px;font-size:17.60px;line-height:17.60px;color:#1a1a1a;transform:scaleX(1.0400);transform-origin:100% 0;">86600</div>
<div class="t" style="left:1304.99px;top:870.55px;font-size:17.60px;line-height:17.60px;color:#1a1a1a;transform:scaleX(1.0400);transform-origin:100% 0;">7676953</div>
<div style="left:511.50px;top:891.60px;width:1009.50px;height:29.35px;background:#ffffff;"></div>
<div style="left:485.50px;top:891.60px;width:26.00px;height:29.35px;background:#dfe3e8;"></div>
<div style="left:485.50px;top:919.75px;width:26.00px;height:1.20px;background:#b5bcc6;"></div>
<div style="left:511.50px;top:919.95px;width:1009.50px;height:1.00px;background:#ebe8de;"></div>
<div style="left:533.50px;top:891.60px;width:1.00px;height:29.35px;background:#ebe8de;"></div>
<div style="left:673.90px;top:891.60px;width:1.00px;height:29.35px;background:#ebe8de;"></div>
<div style="left:814.30px;top:891.60px;width:1.00px;height:29.35px;background:#ebe8de;"></div>
<div style="left:954.70px;top:891.60px;width:1.00px;height:29.35px;background:#ebe8de;"></div>
<div style="left:1095.10px;top:891.60px;width:1.00px;height:29.35px;background:#ebe8de;"></div>
<div style="left:1235.50px;top:891.60px;width:1.00px;height:29.35px;background:#ebe8de;"></div>
<div style="left:1375.90px;top:891.60px;width:1.00px;height:29.35px;background:#ebe8de;"></div>
<svg style="left:516.50px;top:900.60px;" width="13" height="13" viewBox="0 0 13 13"><rect x="0.6" y="0.6" width="11.8" height="11.8" fill="#fff" stroke="#9a9a9a" stroke-width="1.2"/><path d="M3 6.5H10M6.5 3V10" stroke="#000" stroke-width="1.6"/></svg>
<div style="left:533.50px;top:896.10px;width:139.90px;height:25.60px;overflow:hidden;"><div class="t" style="position:absolute;left:5px;top:3px;font-size:17.60px;line-height:17.60px;color:#222222;transform:scaleX(1.12);transform-origin:0 0;">Belgium</div></div>
<div style="left:673.90px;top:896.10px;width:139.90px;height:25.60px;overflow:hidden;"><div class="t" style="position:absolute;left:5px;top:3px;font-size:17.60px;line-height:17.60px;color:#222222;transform:scaleX(1.12);transform-origin:0 0;">B</div></div>
<div style="left:814.30px;top:896.10px;width:139.90px;height:25.60px;overflow:hidden;"><div class="t" style="position:absolute;left:5px;top:3px;font-size:17.60px;line-height:17.60px;color:#222222;transform:scaleX(1.12);transform-origin:0 0;">Brussels</div></div>
<div style="left:954.70px;top:896.10px;width:139.90px;height:25.60px;overflow:hidden;"><div class="t" style="position:absolute;left:5px;top:3px;font-size:17.60px;line-height:17.60px;color:#222222;transform:scaleX(1.12);transform-origin:0 0;">Brabant</div></div>
<div class="t" style="left:1184.06px;top:899.90px;font-size:17.60px;line-height:17.60px;color:#1a1a1a;transform:scaleX(1.0400);transform-origin:100% 0;">30510</div>
<div class="t" style="left:1295.20px;top:899.90px;font-size:17.60px;line-height:17.60px;color:#1a1a1a;transform:scaleX(1.0400);transform-origin:100% 0;">10170241</div>
<div style="left:511.50px;top:920.95px;width:1009.50px;height:29.35px;background:#f2f2f2;"></div>
<div style="left:485.50px;top:920.95px;width:26.00px;height:29.35px;background:#dfe3e8;"></div>
<div style="left:485.50px;top:949.10px;width:26.00px;height:1.20px;background:#b5bcc6;"></div>
<div style="left:511.50px;top:949.30px;width:1009.50px;height:1.00px;background:#ebe8de;"></div>
<div style="left:533.50px;top:920.95px;width:1.00px;height:29.35px;background:#ebe8de;"></div>
<div style="left:673.90px;top:920.95px;width:1.00px;height:29.35px;background:#ebe8de;"></div>
<div style="left:814.30px;top:920.95px;width:1.00px;height:29.35px;background:#ebe8de;"></div>
<div style="left:954.70px;top:920.95px;width:1.00px;height:29.35px;background:#ebe8de;"></div>
<div style="left:1095.10px;top:920.95px;width:1.00px;height:29.35px;background:#ebe8de;"></div>
<div style="left:1235.50px;top:920.95px;width:1.00px;height:29.35px;background:#ebe8de;"></div>
<div style="left:1375.90px;top:920.95px;width:1.00px;height:29.35px;background:#ebe8de;"></div>
<svg style="left:516.50px;top:929.95px;" width="13" height="13" viewBox="0 0 13 13"><rect x="0.6" y="0.6" width="11.8" height="11.8" fill="#fff" stroke="#9a9a9a" stroke-width="1.2"/><path d="M3 6.5H10M6.5 3V10" stroke="#000" stroke-width="1.6"/></svg>
<div style="left:533.50px;top:925.45px;width:139.90px;height:25.60px;overflow:hidden;"><div class="t" style="position:absolute;left:5px;top:3px;font-size:17.60px;line-height:17.60px;color:#222222;transform:scaleX(1.12);transform-origin:0 0;">Bangladesh</div></div>
<div style="left:673.90px;top:925.45px;width:139.90px;height:25.60px;overflow:hidden;"><div class="t" style="position:absolute;left:5px;top:3px;font-size:17.60px;line-height:17.60px;color:#222222;transform:scaleX(1.12);transform-origin:0 0;">BD</div></div>
<div style="left:814.30px;top:925.45px;width:139.90px;height:25.60px;overflow:hidden;"><div class="t" style="position:absolute;left:5px;top:3px;font-size:17.60px;line-height:17.60px;color:#222222;transform:scaleX(1.12);transform-origin:0 0;">Dhaka</div></div>
<div style="left:954.70px;top:925.45px;width:139.90px;height:25.60px;overflow:hidden;"><div class="t" style="position:absolute;left:5px;top:3px;font-size:17.60px;line-height:17.60px;color:#222222;transform:scaleX(1.12);transform-origin:0 0;">Bangladesh</div></div>
<div class="t" style="left:1174.28px;top:929.25px;font-size:17.60px;line-height:17.60px;color:#1a1a1a;transform:scaleX(1.0400);transform-origin:100% 0;">144000</div>
<div class="t" style="left:1285.41px;top:929.25px;font-size:17.60px;line-height:17.60px;color:#1a1a1a;transform:scaleX(1.0400);transform-origin:100% 0;">123062800</div>
<div style="left:511.50px;top:950.30px;width:1009.50px;height:29.35px;background:#ffffff;"></div>
<div style="left:485.50px;top:950.30px;width:26.00px;height:29.35px;background:#dfe3e8;"></div>
<div style="left:485.50px;top:978.45px;width:26.00px;height:1.20px;background:#b5bcc6;"></div>
<div style="left:511.50px;top:978.65px;width:1009.50px;height:1.00px;background:#ebe8de;"></div>
<div style="left:533.50px;top:950.30px;width:1.00px;height:29.35px;background:#ebe8de;"></div>
<div style="left:673.90px;top:950.30px;width:1.00px;height:29.35px;background:#ebe8de;"></div>
<div style="left:814.30px;top:950.30px;width:1.00px;height:29.35px;background:#ebe8de;"></div>
<div style="left:954.70px;top:950.30px;width:1.00px;height:29.35px;background:#ebe8de;"></div>
<div style="left:1095.10px;top:950.30px;width:1.00px;height:29.35px;background:#ebe8de;"></div>
<div style="left:1235.50px;top:950.30px;width:1.00px;height:29.35px;background:#ebe8de;"></div>
<div style="left:1375.90px;top:950.30px;width:1.00px;height:29.35px;background:#ebe8de;"></div>
<svg style="left:516.50px;top:959.30px;" width="13" height="13" viewBox="0 0 13 13"><rect x="0.6" y="0.6" width="11.8" height="11.8" fill="#fff" stroke="#9a9a9a" stroke-width="1.2"/><path d="M3 6.5H10M6.5 3V10" stroke="#000" stroke-width="1.6"/></svg>
<div style="left:533.50px;top:954.80px;width:139.90px;height:25.60px;overflow:hidden;"><div class="t" style="position:absolute;left:5px;top:3px;font-size:17.60px;line-height:17.60px;color:#222222;transform:scaleX(1.12);transform-origin:0 0;">Barbados</div></div>
<div style="left:673.90px;top:954.80px;width:139.90px;height:25.60px;overflow:hidden;"><div class="t" style="position:absolute;left:5px;top:3px;font-size:17.60px;line-height:17.60px;color:#222222;transform:scaleX(1.12);transform-origin:0 0;">BDS</div></div>
<div style="left:814.30px;top:954.80px;width:139.90px;height:25.60px;overflow:hidden;"><div class="t" style="position:absolute;left:5px;top:3px;font-size:17.60px;line-height:17.60px;color:#222222;transform:scaleX(1.12);transform-origin:0 0;">Bridgetown</div></div>
<div style="left:954.70px;top:954.80px;width:139.90px;height:25.60px;overflow:hidden;"><div class="t" style="position:absolute;left:5px;top:3px;font-size:17.60px;line-height:17.60px;color:#222222;transform:scaleX(1.12);transform-origin:0 0;">Barbados</div></div>
<div class="t" style="left:1203.64px;top:958.60px;font-size:17.60px;line-height:17.60px;color:#1a1a1a;transform:scaleX(1.0400);transform-origin:100% 0;">430</div>
<div class="t" style="left:1314.78px;top:958.60px;font-size:17.60px;line-height:17.60px;color:#1a1a1a;transform:scaleX(1.0400);transform-origin:100% 0;">257030</div>
<div style="left:511.50px;top:979.65px;width:1009.50px;height:29.35px;background:#f2f2f2;"></div>
<div style="left:485.50px;top:979.65px;width:26.00px;height:29.35px;background:#dfe3e8;"></div>
<div style="left:485.50px;top:1007.80px;width:26.00px;height:1.20px;background:#b5bcc6;"></div>
<div style="left:511.50px;top:1008.00px;width:1009.50px;height:1.00px;background:#ebe8de;"></div>
<div style="left:533.50px;top:979.65px;width:1.00px;height:29.35px;background:#ebe8de;"></div>
<div style="left:673.90px;top:979.65px;width:1.00px;height:29.35px;background:#ebe8de;"></div>
<div style="left:814.30px;top:979.65px;width:1.00px;height:29.35px;background:#ebe8de;"></div>
<div style="left:954.70px;top:979.65px;width:1.00px;height:29.35px;background:#ebe8de;"></div>
<div style="left:1095.10px;top:979.65px;width:1.00px;height:29.35px;background:#ebe8de;"></div>
<div style="left:1235.50px;top:979.65px;width:1.00px;height:29.35px;background:#ebe8de;"></div>
<div style="left:1375.90px;top:979.65px;width:1.00px;height:29.35px;background:#ebe8de;"></div>
<svg style="left:516.50px;top:988.65px;" width="13" height="13" viewBox="0 0 13 13"><rect x="0.6" y="0.6" width="11.8" height="11.8" fill="#fff" stroke="#9a9a9a" stroke-width="1.2"/><path d="M3 6.5H10M6.5 3V10" stroke="#000" stroke-width="1.6"/></svg>
<div style="left:533.50px;top:984.15px;width:139.90px;height:25.60px;overflow:hidden;"><div class="t" style="position:absolute;left:5px;top:3px;font-size:17.60px;line-height:17.60px;color:#222222;transform:scaleX(1.12);transform-origin:0 0;">Benin</div></div>
<div style="left:673.90px;top:984.15px;width:139.90px;height:25.60px;overflow:hidden;"><div class="t" style="position:absolute;left:5px;top:3px;font-size:17.60px;line-height:17.60px;color:#222222;transform:scaleX(1.12);transform-origin:0 0;">BEN</div></div>
<div style="left:814.30px;top:984.15px;width:139.90px;height:25.60px;overflow:hidden;"><div class="t" style="position:absolute;left:5px;top:3px;font-size:17.60px;line-height:17.60px;color:#222222;transform:scaleX(1.12);transform-origin:0 0;">Porto-Novo</div></div>
<div style="left:954.70px;top:984.15px;width:139.90px;height:25.60px;overflow:hidden;"><div class="t" style="position:absolute;left:5px;top:3px;font-size:17.60px;line-height:17.60px;color:#222222;transform:scaleX(1.12);transform-origin:0 0;">Benin</div></div>
<div class="t" style="left:1175.58px;top:987.95px;font-size:17.60px;line-height:17.60px;color:#1a1a1a;transform:scaleX(1.0400);transform-origin:100% 0;">112620</div>
<div class="t" style="left:1304.99px;top:987.95px;font-size:17.60px;line-height:17.60px;color:#1a1a1a;transform:scaleX(1.0400);transform-origin:100% 0;">5709529</div>
<div style="left:511.50px;top:1009.00px;width:1009.50px;height:29.35px;background:#ffffff;"></div>
<div style="left:485.50px;top:1009.00px;width:26.00px;height:29.35px;background:#dfe3e8;"></div>
<div style="left:485.50px;top:1037.15px;width:26.00px;height:1.20px;background:#b5bcc6;"></div>
<div style="left:511.50px;top:1037.35px;width:1009.50px;height:1.00px;background:#ebe8de;"></div>
<div style="left:533.50px;top:1009.00px;width:1.00px;height:29.35px;background:#ebe8de;"></div>
<div style="left:673.90px;top:1009.00px;width:1.00px;height:29.35px;background:#ebe8de;"></div>
<div style="left:814.30px;top:1009.00px;width:1.00px;height:29.35px;background:#ebe8de;"></div>
<div style="left:954.70px;top:1009.00px;width:1.00px;height:29.35px;background:#ebe8de;"></div>
<div style="left:1095.10px;top:1009.00px;width:1.00px;height:29.35px;background:#ebe8de;"></div>
<div style="left:1235.50px;top:1009.00px;width:1.00px;height:29.35px;background:#ebe8de;"></div>
<div style="left:1375.90px;top:1009.00px;width:1.00px;height:29.35px;background:#ebe8de;"></div>
<svg style="left:516.50px;top:1018.00px;" width="13" height="13" viewBox="0 0 13 13"><rect x="0.6" y="0.6" width="11.8" height="11.8" fill="#fff" stroke="#9a9a9a" stroke-width="1.2"/><path d="M3 6.5H10M6.5 3V10" stroke="#000" stroke-width="1.6"/></svg>
<div style="left:533.50px;top:1013.50px;width:139.90px;height:25.60px;overflow:hidden;"><div class="t" style="position:absolute;left:5px;top:3px;font-size:17.60px;line-height:17.60px;color:#222222;transform:scaleX(1.12);transform-origin:0 0;">Bermuda</div></div>
<div style="left:673.90px;top:1013.50px;width:139.90px;height:25.60px;overflow:hidden;"><div class="t" style="position:absolute;left:5px;top:3px;font-size:17.60px;line-height:17.60px;color:#222222;transform:scaleX(1.12);transform-origin:0 0;">BERM</div></div>
<div style="left:814.30px;top:1013.50px;width:139.90px;height:25.60px;overflow:hidden;"><div class="t" style="position:absolute;left:5px;top:3px;font-size:17.60px;line-height:17.60px;color:#222222;transform:scaleX(1.12);transform-origin:0 0;">Hamilton</div></div>
<div style="left:954.70px;top:1013.50px;width:139.90px;height:25.60px;overflow:hidden;"><div class="t" style="position:absolute;left:5px;top:3px;font-size:17.60px;line-height:17.60px;color:#222222;transform:scaleX(1.12);transform-origin:0 0;">Bermuda</div></div>
<div class="t" style="left:1213.43px;top:1017.30px;font-size:17.60px;line-height:17.60px;color:#1a1a1a;transform:scaleX(1.0400);transform-origin:100% 0;">53</div>
<div class="t" style="left:1324.56px;top:1017.30px;font-size:17.60px;line-height:17.60px;color:#1a1a1a;transform:scaleX(1.0400);transform-origin:100% 0;">67837</div>
<div style="left:511.50px;top:1038.35px;width:1009.50px;height:29.35px;background:#f2f2f2;"></div>
<div style="left:485.50px;top:1038.35px;width:26.00px;height:29.35px;background:#dfe3e8;"></div>
<div style="left:485.50px;top:1066.50px;width:26.00px;height:1.20px;background:#b5bcc6;"></div>
<div style="left:511.50px;top:1066.70px;width:1009.50px;height:1.00px;background:#ebe8de;"></div>
<div style="left:533.50px;top:1038.35px;width:1.00px;height:29.35px;background:#ebe8de;"></div>
<div style="left:673.90px;top:1038.35px;width:1.00px;height:29.35px;background:#ebe8de;"></div>
<div style="left:814.30px;top:1038.35px;width:1.00px;height:29.35px;background:#ebe8de;"></div>
<div style="left:954.70px;top:1038.35px;width:1.00px;height:29.35px;background:#ebe8de;"></div>
<div style="left:1095.10px;top:1038.35px;width:1.00px;height:29.35px;background:#ebe8de;"></div>
<div style="left:1235.50px;top:1038.35px;width:1.00px;height:29.35px;background:#ebe8de;"></div>
<div style="left:1375.90px;top:1038.35px;width:1.00px;height:29.35px;background:#ebe8de;"></div>
<svg style="left:516.50px;top:1047.35px;" width="13" height="13" viewBox="0 0 13 13"><rect x="0.6" y="0.6" width="11.8" height="11.8" fill="#fff" stroke="#9a9a9a" stroke-width="1.2"/><path d="M3 6.5H10M6.5 3V10" stroke="#000" stroke-width="1.6"/></svg>
<div style="left:533.50px;top:1042.85px;width:139.90px;height:25.60px;overflow:hidden;"><div class="t" style="position:absolute;left:5px;top:3px;font-size:17.60px;line-height:17.60px;color:#222222;transform:scaleX(1.12);transform-origin:0 0;">Burkina Faso</div></div>
<div style="left:673.90px;top:1042.85px;width:139.90px;height:25.60px;overflow:hidden;"><div class="t" style="position:absolute;left:5px;top:3px;font-size:17.60px;line-height:17.60px;color:#222222;transform:scaleX(1.12);transform-origin:0 0;">BF</div></div>
<div style="left:814.30px;top:1042.85px;width:139.90px;height:25.60px;overflow:hidden;"><div class="t" style="position:absolute;left:5px;top:3px;font-size:17.60px;line-height:17.60px;color:#222222;transform:scaleX(1.12);transform-origin:0 0;">Ouagadougou</div></div>
<div style="left:954.70px;top:1042.85px;width:139.90px;height:25.60px;overflow:hidden;"><div class="t" style="position:absolute;left:5px;top:3px;font-size:17.60px;line-height:17.60px;color:#222222;transform:scaleX(1.12);transform-origin:0 0;">Burkina Faso</div></div>
<div class="t" style="left:1174.28px;top:1046.65px;font-size:17.60px;line-height:17.60px;color:#1a1a1a;transform:scaleX(1.0400);transform-origin:100% 0;">274200</div>
<div class="t" style="left:1295.20px;top:1046.65px;font-size:17.60px;line-height:17.60px;color:#1a1a1a;transform:scaleX(1.0400);transform-origin:100% 0;">10623323</div>
<div style="left:511.50px;top:1067.70px;width:1009.50px;height:29.35px;background:#ffffff;"></div>
<div style="left:485.50px;top:1067.70px;width:26.00px;height:29.35px;background:#dfe3e8;"></div>
<div style="left:485.50px;top:1095.85px;width:26.00px;height:1.20px;background:#b5bcc6;"></div>
<div style="left:511.50px;top:1096.05px;width:1009.50px;height:1.00px;background:#ebe8de;"></div>
<div style="left:533.50px;top:1067.70px;width:1.00px;height:29.35px;background:#ebe8de;"></div>
<div style="left:673.90px;top:1067.70px;width:1.00px;height:29.35px;background:#ebe8de;"></div>
<div style="left:814.30px;top:1067.70px;width:1.00px;height:29.35px;background:#ebe8de;"></div>
<div style="left:954.70px;top:1067.70px;width:1.00px;height:29.35px;background:#ebe8de;"></div>
<div style="left:1095.10px;top:1067.70px;width:1.00px;height:29.35px;background:#ebe8de;"></div>
<div style="left:1235.50px;top:1067.70px;width:1.00px;height:29.35px;background:#ebe8de;"></div>
<div style="left:1375.90px;top:1067.70px;width:1.00px;height:29.35px;background:#ebe8de;"></div>
<svg style="left:516.50px;top:1076.70px;" width="13" height="13" viewBox="0 0 13 13"><rect x="0.6" y="0.6" width="11.8" height="11.8" fill="#fff" stroke="#9a9a9a" stroke-width="1.2"/><path d="M3 6.5H10M6.5 3V10" stroke="#000" stroke-width="1.6"/></svg>
<div style="left:533.50px;top:1072.20px;width:139.90px;height:25.60px;overflow:hidden;"><div class="t" style="position:absolute;left:5px;top:3px;font-size:17.60px;line-height:17.60px;color:#222222;transform:scaleX(1.12);transform-origin:0 0;">Bulgaria</div></div>
<div style="left:673.90px;top:1072.20px;width:139.90px;height:25.60px;overflow:hidden;"><div class="t" style="position:absolute;left:5px;top:3px;font-size:17.60px;line-height:17.60px;color:#222222;transform:scaleX(1.12);transform-origin:0 0;">BG</div></div>
<div style="left:814.30px;top:1072.20px;width:139.90px;height:25.60px;overflow:hidden;"><div class="t" style="position:absolute;left:5px;top:3px;font-size:17.60px;line-height:17.60px;color:#222222;transform:scaleX(1.12);transform-origin:0 0;">Sofia</div></div>
<div style="left:954.70px;top:1072.20px;width:139.90px;height:25.60px;overflow:hidden;"><div class="t" style="position:absolute;left:5px;top:3px;font-size:17.60px;line-height:17.60px;color:#222222;transform:scaleX(1.12);transform-origin:0 0;">Bulgaria</div></div>
<div class="t" style="left:1175.58px;top:1076.00px;font-size:17.60px;line-height:17.60px;color:#1a1a1a;transform:scaleX(1.0400);transform-origin:100% 0;">110910</div>
<div class="t" style="left:1304.99px;top:1076.00px;font-size:17.60px;line-height:17.60px;color:#1a1a1a;transform:scaleX(1.0400);transform-origin:100% 0;">8612757</div>
<div style="left:511.50px;top:1097.05px;width:1009.50px;height:29.35px;background:#f2f2f2;"></div>
<div style="left:485.50px;top:1097.05px;width:26.00px;height:29.35px;background:#dfe3e8;"></div>
<div style="left:485.50px;top:1125.20px;width:26.00px;height:1.20px;background:#b5bcc6;"></div>
<div style="left:511.50px;top:1125.40px;width:1009.50px;height:1.00px;background:#ebe8de;"></div>
<div style="left:533.50px;top:1097.05px;width:1.00px;height:29.35px;background:#ebe8de;"></div>
<div style="left:673.90px;top:1097.05px;width:1.00px;height:29.35px;background:#ebe8de;"></div>
<div style="left:814.30px;top:1097.05px;width:1.00px;height:29.35px;background:#ebe8de;"></div>
<div style="left:954.70px;top:1097.05px;width:1.00px;height:29.35px;background:#ebe8de;"></div>
<div style="left:1095.10px;top:1097.05px;width:1.00px;height:29.35px;background:#ebe8de;"></div>
<div style="left:1235.50px;top:1097.05px;width:1.00px;height:29.35px;background:#ebe8de;"></div>
<div style="left:1375.90px;top:1097.05px;width:1.00px;height:29.35px;background:#ebe8de;"></div>
<svg style="left:516.50px;top:1106.05px;" width="13" height="13" viewBox="0 0 13 13"><rect x="0.6" y="0.6" width="11.8" height="11.8" fill="#fff" stroke="#9a9a9a" stroke-width="1.2"/><path d="M3 6.5H10M6.5 3V10" stroke="#000" stroke-width="1.6"/></svg>
<div style="left:533.50px;top:1101.55px;width:139.90px;height:25.60px;overflow:hidden;"><div class="t" style="position:absolute;left:5px;top:3px;font-size:17.60px;line-height:17.60px;color:#222222;transform:scaleX(1.12);transform-origin:0 0;">Bhutan</div></div>
<div style="left:673.90px;top:1101.55px;width:139.90px;height:25.60px;overflow:hidden;"><div class="t" style="position:absolute;left:5px;top:3px;font-size:17.60px;line-height:17.60px;color:#222222;transform:scaleX(1.12);transform-origin:0 0;">BHT</div></div>
<div style="left:814.30px;top:1101.55px;width:139.90px;height:25.60px;overflow:hidden;"><div class="t" style="position:absolute;left:5px;top:3px;font-size:17.60px;line-height:17.60px;color:#222222;transform:scaleX(1.12);transform-origin:0 0;">Thimphu</div></div>
<div style="left:954.70px;top:1101.55px;width:139.90px;height:25.60px;overflow:hidden;"><div class="t" style="position:absolute;left:5px;top:3px;font-size:17.60px;line-height:17.60px;color:#222222;transform:scaleX(1.12);transform-origin:0 0;">Bhutan</div></div>
<div class="t" style="left:1184.06px;top:1105.35px;font-size:17.60px;line-height:17.60px;color:#1a1a1a;transform:scaleX(1.0400);transform-origin:100% 0;">47000</div>
<div class="t" style="left:1304.99px;top:1105.35px;font-size:17.60px;line-height:17.60px;color:#1a1a1a;transform:scaleX(1.0400);transform-origin:100% 0;">1822625</div>
<div style="left:511.50px;top:1126.40px;width:1009.50px;height:29.35px;background:#ffffff;"></div>
<div style="left:485.50px;top:1126.40px;width:26.00px;height:29.35px;background:#dfe3e8;"></div>
<div style="left:485.50px;top:1154.55px;width:26.00px;height:1.20px;background:#b5bcc6;"></div>
<div style="left:511.50px;top:1154.75px;width:1009.50px;height:1.00px;background:#ebe8de;"></div>
<div style="left:533.50px;top:1126.40px;width:1.00px;height:29.35px;background:#ebe8de;"></div>
<div style="left:673.90px;top:1126.40px;width:1.00px;height:29.35px;background:#ebe8de;"></div>
<div style="left:814.30px;top:1126.40px;width:1.00px;height:29.35px;background:#ebe8de;"></div>
<div style="left:954.70px;top:1126.40px;width:1.00px;height:29.35px;background:#ebe8de;"></div>
<div style="left:1095.10px;top:1126.40px;width:1.00px;height:29.35px;background:#ebe8de;"></div>
<div style="left:1235.50px;top:1126.40px;width:1.00px;height:29.35px;background:#ebe8de;"></div>
<div style="left:1375.90px;top:1126.40px;width:1.00px;height:29.35px;background:#ebe8de;"></div>
<svg style="left:516.50px;top:1135.40px;" width="13" height="13" viewBox="0 0 13 13"><rect x="0.6" y="0.6" width="11.8" height="11.8" fill="#fff" stroke="#9a9a9a" stroke-width="1.2"/><path d="M3 6.5H10M6.5 3V10" stroke="#000" stroke-width="1.6"/></svg>
<div style="left:533.50px;top:1130.90px;width:139.90px;height:25.60px;overflow:hidden;"><div class="t" style="position:absolute;left:5px;top:3px;font-size:17.60px;line-height:17.60px;color:#222222;transform:scaleX(1.12);transform-origin:0 0;">Burundi</div></div>
<div style="left:673.90px;top:1130.90px;width:139.90px;height:25.60px;overflow:hidden;"><div class="t" style="position:absolute;left:5px;top:3px;font-size:17.60px;line-height:17.60px;color:#222222;transform:scaleX(1.12);transform-origin:0 0;">BI</div></div>
<div style="left:814.30px;top:1130.90px;width:139.90px;height:25.60px;overflow:hidden;"><div class="t" style="position:absolute;left:5px;top:3px;font-size:17.60px;line-height:17.60px;color:#222222;transform:scaleX(1.12);transform-origin:0 0;">Bujumbura</div></div>
<div style="left:954.70px;top:1130.90px;width:139.90px;height:25.60px;overflow:hidden;"><div class="t" style="position:absolute;left:5px;top:3px;font-size:17.60px;line-height:17.60px;color:#222222;transform:scaleX(1.12);transform-origin:0 0;">Burundi</div></div>
<div class="t" style="left:1184.06px;top:1134.70px;font-size:17.60px;line-height:17.60px;color:#1a1a1a;transform:scaleX(1.0400);transform-origin:100% 0;">27830</div>
<div class="t" style="left:1304.99px;top:1134.70px;font-size:17.60px;line-height:17.60px;color:#1a1a1a;transform:scaleX(1.0400);transform-origin:100% 0;">5943057</div>
<div style="left:485.50px;top:538.90px;width:1.50px;height:0.00px;background:#a9b0ba;"></div>
<div style="left:511.00px;top:539.00px;width:1.40px;height:649.00px;background:#b5bcc6;"></div>
<div style="left:511.50px;top:1155.75px;width:1009.50px;height:5.50px;background:#f5f3ec;"></div>
<div style="left:511.50px;top:1160.25px;width:1009.50px;height:1.00px;background:#ebe8de;"></div>
<div style="left:511.50px;top:1161.25px;width:1009.50px;height:27.15px;background:#f0f0f0;"></div>
<div style="left:533.50px;top:1161.25px;width:1.00px;height:27.15px;background:#ebe8de;"></div>
<div style="left:673.90px;top:1161.25px;width:1.00px;height:27.15px;background:#ebe8de;"></div>
<div style="left:814.30px;top:1161.25px;width:1.00px;height:27.15px;background:#ebe8de;"></div>
<div style="left:954.70px;top:1161.25px;width:1.00px;height:27.15px;background:#ebe8de;"></div>
<div style="left:1095.10px;top:1161.25px;width:1.00px;height:27.15px;background:#ebe8de;"></div>
<div style="left:1235.50px;top:1161.25px;width:1.00px;height:27.15px;background:#ebe8de;"></div>
<div style="left:1375.90px;top:1161.25px;width:1.00px;height:27.15px;background:#ebe8de;"></div>
<div style="left:485.50px;top:1155.75px;width:26.00px;height:32.65px;background:#dfe3e8;"></div>
<div style="left:485.50px;top:1155.25px;width:26.00px;height:1.20px;background:#b5bcc6;"></div>
<div class="t" style="left:629.27px;top:1167.50px;font-size:17.60px;line-height:17.60px;color:#1a1a1a;transform:scaleX(1.1200);transform-origin:100% 0;font-weight:bold;">Total</div>
<div class="t" style="left:1276.13px;top:1167.50px;font-size:17.60px;line-height:17.60px;color:#1a1a1a;transform:scaleX(1.0524);transform-origin:100% 0;font-weight:bold;">5774449258</div>
<div style="left:1521.00px;top:511.00px;width:27.00px;height:677.40px;background:#f0f0f0;"></div>
<div style="left:1525.00px;top:515.00px;width:20.50px;height:20.50px;background:#ffffff;box-shadow:inset 0 0 0 1px #b8b8b8;"></div>
<svg style="left:1529.00px;top:521.00px;" width="12" height="8" viewBox="0 0 12 8"><path d="M1 7H11L6 1z" fill="#666"/></svg>
<div style="left:1525.00px;top:536.80px;width:20.50px;height:51.20px;background:#ffffff;box-shadow:inset 0 0 0 1px #b8b8b8;"></div>
<div style="left:1525.00px;top:1165.00px;width:20.50px;height:20.50px;background:#ffffff;box-shadow:inset 0 0 0 1px #b8b8b8;"></div>
<svg style="left:1529.00px;top:1171.00px;" width="12" height="8" viewBox="0 0 12 8"><path d="M1 1H11L6 7z" fill="#666"/></svg>
<div style="left:485.50px;top:1188.40px;width:1062.50px;height:2.40px;background:#b5bcc6;"></div>
<div style="left:485.50px;top:1190.80px;width:1037.00px;height:13.20px;background:#f3f4f6;"></div>
<div style="left:485.50px;top:1204.00px;width:1037.00px;height:12.50px;background:#e6e8ec;"></div>
<div style="left:485.50px;top:1216.50px;width:1062.50px;height:1.90px;background:#c8cacf;"></div>
<div style="left:1522.50px;top:1190.80px;width:25.50px;height:25.70px;background:#c8cacf;"></div>
<div class="t" style="left:492.60px;top:1196.76px;font-size:15.64px;line-height:15.64px;color:#555555;transform:scaleX(1.0041);transform-origin:0 0;">Record:</div>
<svg style="left:556.00px;top:1196.00px;" width="40" height="14" viewBox="0 0 40 14"><rect x="3" y="1.5" width="1.6" height="10" fill="#333"/><path d="M12 1.5V11.5L5.5 6.5z" fill="#333"/><path d="M36 1.5V11.5L29.5 6.5z" fill="#bbb"/></svg>
<div style="left:600.50px;top:1192.80px;width:73.10px;height:21.70px;background:#ffffff;box-shadow:inset 0 0 0 1px #c8c8c8;"></div>
<div class="t" style="left:603.60px;top:1196.76px;font-size:15.64px;line-height:15.64px;color:#111111;transform:scaleX(1.0259);transform-origin:0 0;">1 of 238</div>
<svg style="left:684.00px;top:1196.00px;" width="70" height="14" viewBox="0 0 70 14"><path d="M3.5 1.5V11.5L10 6.5z" fill="#333"/><path d="M27.5 1.5V11.5L34 6.5z" fill="#333"/><rect x="35" y="1.5" width="1.6" height="10" fill="#333"/><path d="M47.5 1.5V11.5L54 6.5z" fill="#333"/><rect x="56" y="2" width="9" height="9" fill="#f3d34a"/><rect x="58.5" y="4.5" width="4" height="4" fill="#fff3b0"/></svg>
<div style="left:758.50px;top:1191.00px;width:1.20px;height:25.00px;background:#c8cacf;"></div>
<svg style="left:770.00px;top:1194.00px;" width="24" height="20" viewBox="0 0 24 20"><path d="M2 2H16L10.5 8.5V15H7.5V8.5z" fill="#a8a8a8"/><path d="M11 11L18 18M18 11L11 18" stroke="#a8a8a8" stroke-width="1.8"/></svg>
<div class="t" style="left:798.00px;top:1196.76px;font-size:15.64px;line-height:15.64px;color:#8a8a8a;transform:scaleX(1.0828);transform-origin:0 0;">No Filter</div>
<div style="left:875.00px;top:1191.00px;width:1.20px;height:25.00px;background:#c8cacf;"></div>
<div style="left:883.50px;top:1192.80px;width:102.50px;height:21.70px;background:#ffffff;box-shadow:inset 0 0 0 1px #c8c8c8;"></div>
<div class="t" style="left:887.00px;top:1196.76px;font-size:15.64px;line-height:15.64px;color:#111111;transform:scaleX(1.0088);transform-origin:0 0;">Search</div>
<svg style="left:1450.00px;top:1221.00px;" width="26" height="24" viewBox="0 0 26 24"><rect x="3" y="2.5" width="19.5" height="18" fill="none" stroke="#555" stroke-width="1.5"/><path d="M3 6.5H22.5M9 2.5V20.5" stroke="#555" stroke-width="1.3"/><path d="M12 11H14.5M16.5 11H19.5M12 15.5H14.5M16.5 15.5H19.5" stroke="#555" stroke-width="1.6"/></svg>
<svg style="left:1505.00px;top:1220.00px;" width="28" height="24" viewBox="0 0 28 24"><path d="M3.5 2.5V15H12" fill="none" stroke="#555" stroke-width="1.3"/><path d="M3.5 2.5L12 15" stroke="#555" stroke-width="1.1"/><path d="M9 13L22 2" stroke="#555" stroke-width="2.4"/><rect x="5" y="17" width="19" height="5" fill="#fff" stroke="#555" stroke-width="1.3"/><path d="M9 17V19M13 17V19M17 17V19M21 17V19" stroke="#555" stroke-width="1"/></svg>
<svg style="left:1190.00px;top:1100.00px;" width="260" height="140" viewBox="0 0 2480 1335"><path fill="#fd9a06" fill-rule="evenodd" d="M155 680A1100 500 0 1 0 2355 680A1100 500 0 1 0 155 680Z M290 680A962 400 0 1 1 2214 680A962 400 0 1 1 290 680Z" transform="rotate(1.2 1255 680)"/></svg>
<div style="left:1850.20px;top:563.20px;width:557.00px;height:321.50px;background:#87c052;border-radius:30px;"></div>
<div style="left:1836.00px;top:510.00px;width:111.00px;height:111.50px;background:#4c9a34;border-radius:50%;box-shadow:0 1px 5px rgba(0,0,0,0.35);"></div>
<div style="left:1860.00px;top:534.00px;width:63.00px;height:63.50px;background:#ffffff;border-radius:50%;"></div>
<svg style="left:1830.00px;top:505.00px;" width="125" height="125" viewBox="0 0 125 125"><circle cx="61.4" cy="43" r="6.7" fill="#4c9a34"/><path d="M49.7 52.4H66.8V78.4H72.1V83.8H52V78.4H55.1V57.3H49.7z" fill="#4c9a34"/></svg>
<div class="t" style="left:1876.00px;top:657.60px;font-size:47.49px;line-height:47.49px;color:#ffffff;transform:scaleX(1.0031);transform-origin:0 0;">From left to right:</div>
<div class="t" style="left:1878.00px;top:757.24px;font-size:34.92px;line-height:34.92px;color:#ffffff;transform:scaleX(1.0307);transform-origin:0 0;">Access</div>
<svg style="left:2245.00px;top:1275.00px;" width="220" height="95" viewBox="0 0 2480 1071">
<g fill="#4c9f45">
<path d="M400 110C340 250 320 450 365 590L440 585C480 420 460 250 400 110Z"/>
<path d="M510 540C520 330 640 220 850 215C850 420 730 545 510 540Z"/>
<path d="M115 720C200 620 330 580 500 590C800 610 1040 800 1040 975C900 1010 720 990 560 860C420 740 360 660 270 660C200 660 150 690 115 720Z"/>
</g>
<path d="M1372 338Q1330 298 1240 298Q1119 298 1119 420V590Q1119 708 1240 708Q1356 708 1356 590V535H1225" fill="none" stroke="#000" stroke-width="88"/>
<path fill="#000" fill-rule="evenodd" d="M1465 262H1640Q1785 262 1785 405Q1785 470 1740 505Q1790 545 1790 610Q1790 745 1640 745H1465Z M1555 345H1635Q1705 345 1705 405Q1705 462 1635 462H1555Z M1555 543H1640Q1705 543 1705 605Q1705 665 1640 665H1555Z"/>
<rect x="1860" y="262" width="88" height="483" fill="#000"/>
<path d="M2040 262H2325V345H2130V462H2295V540H2130V745H2040Z" fill="#000"/>
</svg>
</body></html>
